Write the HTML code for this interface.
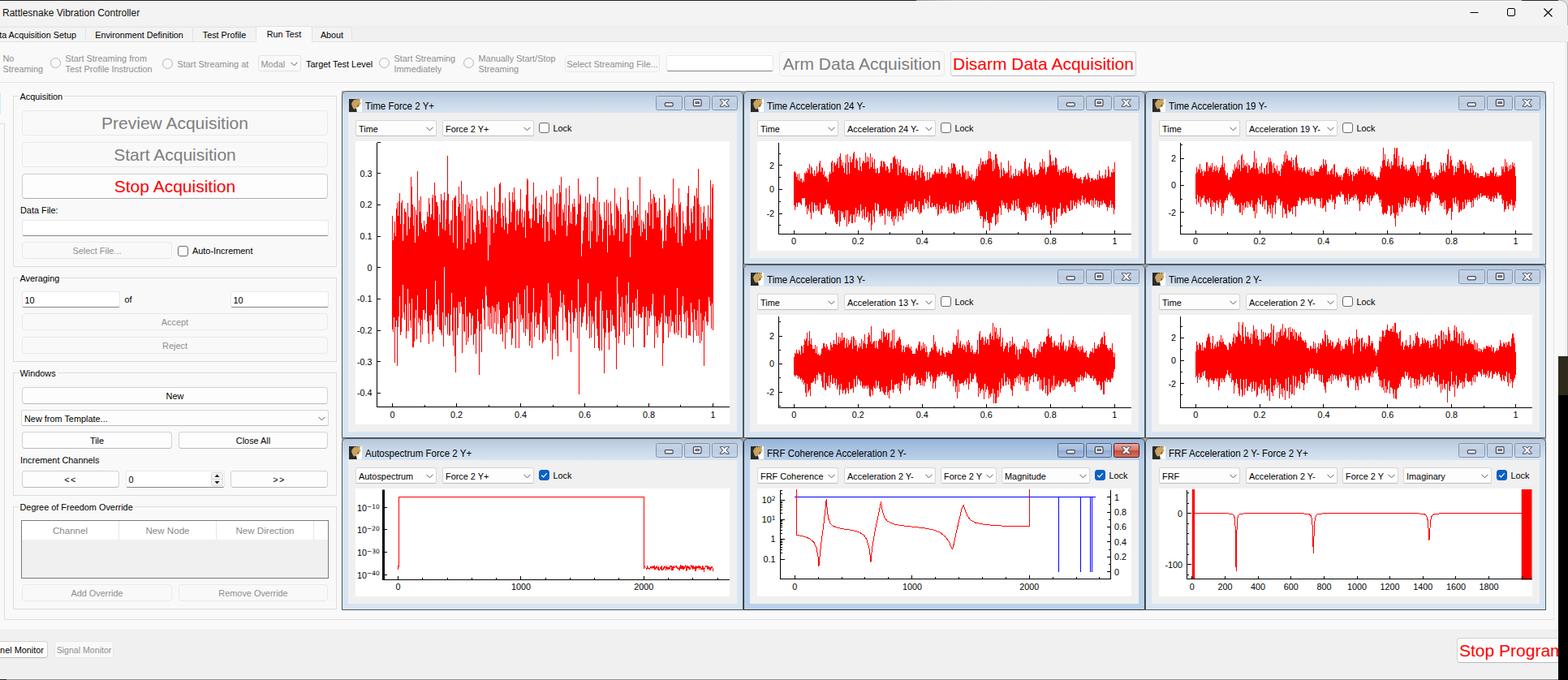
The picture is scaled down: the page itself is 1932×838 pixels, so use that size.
<!DOCTYPE html><html><head><meta charset="utf-8"><title>Rattlesnake Vibration Controller</title><style>

html,body{margin:0;padding:0}
body{width:1932px;height:838px;overflow:hidden;position:relative;background:#f9f9f9;font-family:"Liberation Sans",sans-serif;font-size:10.9px;color:#000}
div,span,svg{position:absolute;box-sizing:border-box;white-space:nowrap}
.titlebar{left:0;top:0;width:1932px;height:31px;background:#f3f3f3}
.tabbar{left:0;top:31px;width:1932px;height:21px;background:#f0f0f0;border-bottom:1px solid #e4e4e4}
.tab{top:33px;height:18px;border:1px solid #e4e4e4;border-bottom:none;background:#f3f3f3;text-align:center;line-height:18px;font-size:10.8px;border-radius:3px 3px 0 0}
.tab.sel{top:32px;height:20px;background:#f9f9f9;border-color:#e2e2e2;line-height:19px}
.gray{color:#8f8f8f}
.rad{width:13px;height:13px;border-radius:50%;border:1px solid #b5b5b5;background:#f9f9f9}
.btn{background:#fdfdfd;border:1px solid #d2d2d2;border-bottom-color:#b9b9b9;border-radius:4px;text-align:center;line-height:20px;height:21px}
.btn.dis{background:#f9f9f9;border-color:#e9e9e9;color:#8e8e8e}
.big{font-size:21px;height:31px;line-height:29px}
.big.dis{color:#7e7e7e}
.red{color:#f00}
.le{background:#fff;border:1px solid #e8e8e8;border-bottom:1px solid #868686;border-radius:3px;height:20px;line-height:20px;padding-left:3px}
.gb{border:1px solid #dcdcdc;border-radius:0}
.gl{background:#f9f9f9;padding:0 2px;line-height:12px;height:12px}
.lbl{line-height:13px;height:13px}
.cb{background:#fdfdfd;border:1px solid #d6d6d6;border-bottom-color:#bdbdbd;border-radius:2.5px;padding-left:3px;overflow:hidden}
.cb.dis{background:#f9f9f9;border-color:#e3e3e3;color:#8e8e8e}
.chev{right:3px;top:6.5px}
.ck{width:13px;height:13px;border:1px solid #6b6b6b;border-radius:3px;background:#fdfdfd}
.ck.on{background:#0a60c4;border-color:#0a60c4}
.ck.on svg{left:-1px;top:-1px}
.sw{border:1px solid #50555c;border-radius:6px 6px 0 0;background:#d7e4f2;overflow:hidden}
.sw.act{background:#b9d1ea;border-color:#2d3238}
.tb{left:0;top:0;right:0;height:26px;background:linear-gradient(#b4c6db 0,#c6d5e6 40%,#d7e4f2 100%)}
.sw.act .tb{background:linear-gradient(#94b2d6 0,#a9c3e2 45%,#b9d1ea 100%)}
.ico{left:8px;top:9px}
.tt{left:28px;top:11px;font-size:12.3px;line-height:14px;transform:scaleX(.94);transform-origin:0 50%}
.ct{left:7px;top:26px;right:7px;bottom:7px;background:#f0f0f0}
.wb{top:5px;width:32.5px;height:18px;border:1px solid #8594ab;border-radius:2.5px;background:linear-gradient(#c5d3e6 0,#c0cfe3 49%,#bccce1 50%,#c8d6e8 100%);right:0}
.wb svg{left:-1px;top:-1px}
.wb.act{border-color:#4f6489;background:linear-gradient(#b5c9e4 0,#a5bcdc 49%,#8eaacf 50%,#a9c1e0 100%)}
.wb.close{border-color:#5a1a14;background:linear-gradient(#e8a99e 0,#d7786b 49%,#c44a39 50%,#d8705c 100%)}
.plot{overflow:hidden}
.th{top:0;height:23px;background:#fff;border-right:1px solid #e6e6e6;text-align:center;line-height:23px;color:#8a8a8a;font-size:11.6px}

</style></head><body>
<div class="titlebar"></div>
<div style="left:0;top:0;width:1932px;height:2px;background:#fdfdfd"></div><div style="left:0;top:0;width:1129px;height:1px;background:#1f1f1f"></div>
<div style="left:1129px;top:0;width:803px;height:1px;background:linear-gradient(90deg,#8f8f8f,#b4b4b4 6%,#b9b9b9)"></div>
<div style="left:1875px;top:0;width:45px;height:1px;background:#1f2630"></div>
<div style="left:1931px;top:6px;width:1px;height:433px;background:#b9b9b9"></div><div style="left:1928px;top:52px;width:3px;height:387px;background:#f1f1f1"></div>
<svg style="left:1922px;top:0" width="10" height="10"><path d="M0 0H10V10A9 9 0 0 0 1 1H0Z" fill="#dcdcdc"/><path d="M0 .5H1A9 9 0 0 1 9.5 9.5" fill="none" stroke="#b4b4b4"/></svg>
<div style="left:3px;top:9px;font-size:12px;line-height:15px;color:#111">Rattlesnake Vibration Controller</div>
<svg style="left:1800px;top:0" width="132" height="31"><path d="M11.5 15.5h10" stroke="#000" stroke-width="1"/><rect x="57.5" y="10.5" width="9" height="9" rx="1.5" fill="none" stroke="#000"/><path d="M102.5 10.5l10 10m0-10l-10 10" stroke="#000" stroke-width="1.1"/></svg>
<div class="tabbar"></div>
<div class="tab" style="left:-30px;width:136px;text-align:right;padding-right:11px">Data Acquisition Setup</div>
<div class="tab" style="left:105px;width:133px">Environment Definition</div>
<div class="tab" style="left:237px;width:79px">Test Profile</div>
<div class="tab" style="left:384px;width:50px">About</div>
<div class="tab sel" style="left:315px;width:70px">Run Test</div>
<div style="left:0;top:101px;width:1915px;height:1px;background:#e3e3e3"></div>
<div class="lbl gray" style="left:3.5px;top:65.5px">No</div><div class="lbl gray" style="left:3.5px;top:78.5px">Streaming</div>
<div class="rad" style="left:62px;top:71px"></div>
<div class="lbl gray" style="left:80.5px;top:65.5px">Start Streaming from</div><div class="lbl gray" style="left:80.5px;top:78.5px">Test Profile Instruction</div>
<div class="rad" style="left:200px;top:72px"></div>
<div class="lbl gray" style="left:218.5px;top:72.5px">Start Streaming at</div>
<div class="cb dis" style="left:317.5px;top:68px;width:53px;height:20px;line-height:20px">Modal<svg class="chev" width="9" height="6" viewBox="0 0 9 6"><path d="M.5 .8L4.5 4.8L8.5 .8" fill="none" stroke="#555" stroke-width="1"/></svg></div>
<div class="lbl" style="left:377px;top:72.5px">Target Test Level</div>
<div class="rad" style="left:467px;top:71px"></div>
<div class="lbl gray" style="left:485.5px;top:65.5px">Start Streaming</div><div class="lbl gray" style="left:485.5px;top:78.5px">Immediately</div>
<div class="rad" style="left:571px;top:71px"></div>
<div class="lbl gray" style="left:589.5px;top:65.5px">Manually Start/Stop</div><div class="lbl gray" style="left:589.5px;top:78.5px">Streaming</div>
<div class="btn dis" style="left:696px;top:68px;width:117px;height:21px;line-height:20px">Select Streaming File...</div>
<div class="le" style="left:820.5px;top:68px;width:132px;height:20px"></div>
<div class="btn big dis" style="left:960px;top:63px;width:204px;height:31px">Arm Data Acquisition</div>
<div class="btn big red" style="left:1171px;top:63px;width:229px;height:31px">Disarm Data Acquisition</div>
<div style="left:5px;top:152px;width:1px;height:612px;background:#dedede"></div>
<div style="left:0;top:152px;width:6px;height:1px;background:#dedede"></div>
<div style="left:5px;top:763px;width:1910px;height:1px;background:#dedede"></div>
<div style="left:1914px;top:101px;width:1px;height:663px;background:#e6e6e6"></div>
<div style="left:0;top:115px;width:1px;height:25px;background:repeating-linear-gradient(#9fe3f3 0 1px,#f9f9f9 1px 2px)"></div>
<div class="gb" style="left:16px;top:118px;width:399px;height:211px"></div>
<div class="gl" style="left:22.5px;top:112.5px">Acquisition</div>
<div class="btn big dis" style="left:27px;top:136px;width:377px">Preview Acquisition</div>
<div class="btn big dis" style="left:27px;top:175px;width:377px">Start Acquisition</div>
<div class="btn big red" style="left:27px;top:214px;width:377px;border-color:#cfcfcf;border-bottom-color:#adadad">Stop Acquisition</div>
<div class="lbl" style="left:25px;top:252.5px">Data File:</div>
<div class="le" style="left:26.5px;top:271px;width:378px"></div>
<div class="btn dis" style="left:27px;top:298px;width:185px">Select File...</div>
<div class="ck" style="left:219px;top:302.5px"></div>
<div class="lbl" style="left:237px;top:302.5px">Auto-Increment</div>
<div class="gb" style="left:16px;top:342px;width:399px;height:104px"></div>
<div class="gl" style="left:22.5px;top:336.5px">Averaging</div>
<div class="le" style="left:26.5px;top:359px;width:121px">10</div>
<div class="lbl" style="left:153.5px;top:363px">of</div>
<div class="le" style="left:283.5px;top:359px;width:121px">10</div>
<div class="btn dis" style="left:27px;top:386px;width:377px">Accept</div>
<div class="btn dis" style="left:27px;top:415px;width:377px">Reject</div>
<div class="gb" style="left:16px;top:459px;width:399px;height:152px"></div>
<div class="gl" style="left:22.5px;top:453.5px">Windows</div>
<div class="btn" style="left:27px;top:477px;width:377px">New</div>
<div class="cb" style="left:26px;top:505px;width:379px;height:20px;line-height:20px">New from Template...<svg class="chev" width="9" height="6" viewBox="0 0 9 6"><path d="M.5 .8L4.5 4.8L8.5 .8" fill="none" stroke="#555" stroke-width="1"/></svg></div>
<div class="btn" style="left:27px;top:532px;width:185px">Tile</div>
<div class="btn" style="left:220px;top:532px;width:184px">Close All</div>
<div class="lbl" style="left:25px;top:560.5px">Increment Channels</div>
<div class="btn" style="left:27px;top:580px;width:120px;letter-spacing:1.5px">&lt;&lt;</div>
<div class="le" style="left:154.5px;top:580px;width:122px;height:21px;line-height:21px">0</div>
<svg style="left:260px;top:582px" width="15" height="17"><rect x=".5" y=".5" width="14" height="16" rx="1" fill="#f2f2f2" stroke="#d9d9d9"/><path d="M0 8.5h15" stroke="#d9d9d9"/><path d="M4.5 6L7.5 2.5L10.5 6ZM4.5 11L7.5 14.5L10.5 11Z" fill="#222"/></svg>
<div class="btn" style="left:284px;top:580px;width:120px;letter-spacing:1.5px">&gt;&gt;</div>
<div class="gb" style="left:16px;top:624px;width:399px;height:127px"></div>
<div class="gl" style="left:22.5px;top:618.5px">Degree of Freedom Override</div>
<div style="left:26px;top:641px;width:379px;height:72px;border:1px solid #7a7a7a;background:#f0f0f0"></div>
<div style="left:27px;top:642px;width:377px;height:23px;background:#fff"></div>
<div class="th" style="left:27px;top:642px;width:120px">Channel</div>
<div class="th" style="left:147px;top:642px;width:120px">New Node</div>
<div class="th" style="left:267px;top:642px;width:120px">New Direction</div>
<div class="btn dis" style="left:27px;top:720px;width:185px">Add Override</div>
<div class="btn dis" style="left:220px;top:720px;width:184px">Remove Override</div>
<div style="left:0;top:776px;width:1932px;height:62px;background:#f0f0f0"></div>
<div style="left:0;top:776px;width:1932px;height:1px;background:#e9e9e9"></div>
<div class="btn" style="left:-40px;top:790px;width:99px;text-align:right;padding-right:4px">Channel Monitor</div>
<div class="btn dis" style="left:67px;top:790px;width:73px;font-size:10.6px">Signal Monitor</div>
<div class="btn big red" style="left:1795px;top:785.5px;width:150px;text-align:left;padding-left:2px">Stop Program</div>
<div style="left:0;top:836px;width:1920px;height:1px;background:#f8f8f8"></div><div style="left:0;top:837px;width:1920px;height:1px;background:#8f8f8f"></div><div style="left:0;top:837px;width:8px;height:1px;background:#222"></div>
<div style="left:1920px;top:439px;width:12px;height:399px;background:#000"></div>
<div style="left:1920px;top:439px;width:12px;height:48px;background:#2e2a1c"></div>
<div style="left:421px;top:112px;width:1484px;height:640px;background:#a0a0a0"></div>
<div class="sw" style="left:421px;top:112px;width:495px;height:428px"><div class="tb"><svg class="ico" width="16" height="16" viewBox="0 0 16 16"><rect width="16" height="16" fill="#fff"/><path d="M0 0H9V12.5H9.4L9.8 16H0Z" fill="#2b2a27"/><path d="M6.6 1L7.6 .2L8.6 1.6L9.6 .5L11 .8L12 0H14V1.6L13.2 3L14.2 4.2L14.6 6L13.6 6.6L13 8L11.4 9.8L9.6 10.6L8.4 12L5.8 12.4L4.6 10.4L3.6 8L3 5.6L4 4L4.8 2.6Z" fill="#c9a35e"/><path d="M10.2 9.2L11.4 6.2L12 8.4L11 9.4Z" fill="#4a391c"/><path d="M8.8 .4L12 .2L11 1.2Z" fill="#2b2a27"/></svg><span class="tt">Time Force 2 Y+</span><div class="wb" style="right:74.2px"><svg width="33" height="18"><rect x="11.3" y="8.6" width="9.9" height="4.2" rx="1.4" fill="#f4f4f4" stroke="#43475a" stroke-width="1.2"/></svg></div><div class="wb" style="right:39.8px"><svg width="33" height="18"><rect x="11.4" y="4.7" width="9.6" height="8" rx="1.3" fill="#f6f6f6" stroke="#43475a" stroke-width="1.2"/><rect x="14.1" y="7.7" width="4.2" height="1.7" fill="#c9d5e6" stroke="#43475a" stroke-width="1.1"/></svg></div><div class="wb" style="right:5.8px"><svg width="33" height="18"><path d="M10.6 4.8h3.3l7 8h-3.3zM17.6 4.8h3.3l-7 8h-3.3z" fill="#43475a" stroke="#43475a" stroke-width="1.7" stroke-linejoin="round"/><path d="M10.6 4.8h3.3l7 8h-3.3zM17.6 4.8h3.3l-7 8h-3.3z" fill="#f6f6f6"/></svg></div></div><div class="ct"></div></div><div class="cb" style="left:438px;top:148px;width:100px;height:20px;line-height:20px">Time<svg class="chev" width="9" height="6" viewBox="0 0 9 6"><path d="M.5 .8L4.5 4.8L8.5 .8" fill="none" stroke="#555" stroke-width="1"/></svg></div><div class="cb" style="left:545px;top:148px;width:112.5px;height:20px;line-height:20px">Force 2 Y+<svg class="chev" width="9" height="6" viewBox="0 0 9 6"><path d="M.5 .8L4.5 4.8L8.5 .8" fill="none" stroke="#555" stroke-width="1"/></svg></div><div class="ck" style="left:664px;top:151px"></div><div class="lbl" style="left:681.5px;top:151.5px">Lock</div><svg class="plot" style="left:438px;top:174px" width="461" height="349" viewBox="438 174 461 349"><rect x="438" y="174" width="461" height="349" fill="#fff"/><path d="M483.5 266V406M484.5 296V409M485.5 287V391M486.5 273V447M487.5 291V403M488.5 257V395M489.5 250V451M490.5 266V403M491.5 248V390M492.5 238V365M493.5 276V413M494.5 250V409M495.5 247V392M496.5 297V351M497.5 276V385M498.5 257V394M499.5 261V375M500.5 262V417M501.5 290V408M502.5 250V356M503.5 267V408M504.5 282V374M505.5 268V395M506.5 218V404M507.5 230V368M508.5 252V428M509.5 278V428M510.5 255V421M511.5 299V392M512.5 259V382M513.5 265V418M514.5 211V364M515.5 291V398M516.5 247V392M517.5 261V401M518.5 242V422M519.5 275V394M520.5 281V412M521.5 283V382M522.5 272V382M523.5 278V394M524.5 286V386M525.5 276V356M526.5 261V396M527.5 267V411M528.5 244V424M529.5 251V389M530.5 268V395M531.5 264V388M532.5 244V412M533.5 240V421M534.5 271V408M535.5 225V382M536.5 241V346M537.5 249V375M538.5 249V388M539.5 254V403M540.5 291V369M541.5 264V406M542.5 274V407M543.5 239V410M544.5 246V413M545.5 282V385M546.5 247V427M547.5 237V329M548.5 284V401M549.5 270V390M550.5 247V391M551.5 192V412M552.5 239V386M553.5 276V414M554.5 290V413M555.5 272V388M556.5 271V361M557.5 247V408M558.5 299V426M559.5 244V379M560.5 243V439M561.5 241V459M562.5 266V379M563.5 306V413M564.5 255V404M565.5 230V372M566.5 251V386M567.5 261V372M568.5 223V378M569.5 272V435M570.5 239V387M571.5 308V408M572.5 266V409M573.5 252V366M574.5 299V425M575.5 240V390M576.5 294V421M577.5 249V416M578.5 257V385M579.5 251V386M580.5 301V413M581.5 247V392M582.5 254V389M583.5 283V425M584.5 286V412M585.5 299V411M586.5 277V436M587.5 245V405M588.5 260V381M589.5 271V396M590.5 276V462M591.5 288V408M592.5 242V399M593.5 259V434M594.5 253V369M595.5 274V380M596.5 257V394M597.5 260V406M598.5 258V353M599.5 280V364M600.5 236V378M601.5 321V402M602.5 266V379M603.5 302V406M604.5 270V386M605.5 253V405M606.5 258V377M607.5 268V411M608.5 287V379M609.5 231V398M610.5 259V384M611.5 276V412M612.5 262V375M613.5 260V399M614.5 249V372M615.5 227V382M616.5 225V412M617.5 269V405M618.5 280V411M619.5 250V421M620.5 266V392M621.5 283V398M622.5 244V430M623.5 268V389M624.5 275V410M625.5 288V387M626.5 276V373M627.5 237V379M628.5 247V406M629.5 274V398M630.5 261V425M631.5 237V417M632.5 249V371M633.5 231V396M634.5 246V397M635.5 284V429M636.5 260V366M637.5 258V393M638.5 277V361M639.5 260V429M640.5 257V375M641.5 233V397M642.5 274V388M643.5 258V394M644.5 280V392M645.5 268V410M646.5 260V357M647.5 293V414M648.5 240V405M649.5 220V352M650.5 222V406M651.5 260V386M652.5 269V426M653.5 270V420M654.5 281V397M655.5 269V429M656.5 252V385M657.5 225V355M658.5 272V415M659.5 244V390M660.5 242V385M661.5 257V404M662.5 275V400M663.5 275V400M664.5 250V419M665.5 265V386M666.5 252V378M667.5 240V370M668.5 281V423M669.5 264V421M670.5 258V397M671.5 298V419M672.5 267V402M673.5 235V406M674.5 273V411M675.5 274V349M676.5 297V391M677.5 261V361M678.5 242V420M679.5 243V367M680.5 282V443M681.5 233V411M682.5 284V406M683.5 252V406M684.5 289V418M685.5 250V389M686.5 238V423M687.5 267V439M688.5 251V384M689.5 228V378M690.5 237V358M691.5 218V379M692.5 278V373M693.5 258V407M694.5 262V363M695.5 252V376M696.5 272V392M697.5 232V397M698.5 291V419M699.5 278V420M700.5 253V382M701.5 229V385M702.5 275V399M703.5 261V434M704.5 276V370M705.5 251V385M706.5 255V410M707.5 245V396M708.5 255V392M709.5 278V380M710.5 276V385M711.5 264V417M712.5 220V344M713.5 251V486M714.5 239V384M715.5 241V379M716.5 316V403M717.5 300V398M718.5 284V390M719.5 267V385M720.5 261V378M721.5 242V374M722.5 268V407M723.5 250V399M724.5 250V349M725.5 297V390M726.5 239V417M727.5 306V383M728.5 272V416M729.5 285V390M730.5 251V399M731.5 243V396M732.5 244V429M733.5 259V371M734.5 247V366M735.5 298V405M736.5 218V414M737.5 290V429M738.5 249V432M739.5 264V370M740.5 267V359M741.5 271V432M742.5 298V383M743.5 282V405M744.5 249V460M745.5 272V416M746.5 272V410M747.5 246V382M748.5 311V392M749.5 250V410M750.5 277V431M751.5 290V409M752.5 248V382M753.5 263V408M754.5 278V388M755.5 284V401M756.5 290V402M757.5 232V406M758.5 282V416M759.5 251V455M760.5 254V341M761.5 257V362M762.5 260V423M763.5 297V414M764.5 243V378M765.5 264V391M766.5 274V366M767.5 298V409M768.5 270V385M769.5 281V425M770.5 264V398M771.5 288V364M772.5 287V414M773.5 231V374M774.5 246V348M775.5 261V412M776.5 317V391M777.5 290V404M778.5 266V405M779.5 281V373M780.5 248V428M781.5 272V383M782.5 259V383M783.5 259V368M784.5 268V389M785.5 253V357M786.5 264V404M787.5 278V387M788.5 218V387M789.5 291V391M790.5 271V392M791.5 286V385M792.5 273V378M793.5 276V428M794.5 282V428M795.5 259V391M796.5 296V378M797.5 262V413M798.5 263V383M799.5 249V402M800.5 278V392M801.5 234V384M802.5 251V389M803.5 245V375M804.5 282V362M805.5 239V389M806.5 243V429M807.5 250V390M808.5 249V411M809.5 268V402M810.5 260V416M811.5 268V395M812.5 244V400M813.5 259V397M814.5 284V391M815.5 281V386M816.5 306V451M817.5 297V423M818.5 240V364M819.5 245V398M820.5 297V389M821.5 277V391M822.5 266V399M823.5 262V416M824.5 258V390M825.5 260V409M826.5 281V382M827.5 256V402M828.5 251V396M829.5 220V397M830.5 279V410M831.5 253V412M832.5 287V388M833.5 262V410M834.5 267V355M835.5 299V413M836.5 232V407M837.5 252V388M838.5 249V396M839.5 299V416M840.5 303V377M841.5 260V365M842.5 275V387M843.5 288V397M844.5 279V385M845.5 283V417M846.5 254V383M847.5 238V392M848.5 229V413M849.5 278V413M850.5 287V414M851.5 257V373M852.5 261V385M853.5 275V397M854.5 254V422M855.5 241V381M856.5 242V407M857.5 297V394M858.5 232V414M859.5 244V383M860.5 208V414M861.5 252V369M862.5 295V423M863.5 255V386M864.5 275V420M865.5 283V409M866.5 262V395M867.5 254V451M868.5 273V390M869.5 269V384M870.5 295V396M871.5 279V401M872.5 253V397M873.5 284V366M874.5 268V371M875.5 222V377M876.5 270V405M877.5 231V374M878.5 227V407" stroke="#f00" stroke-width="1" fill="none" shape-rendering="crispEdges"/><path d="M464.5 175.5V501.5H899M464.5 175h4M464.5 213.7h4M464.5 252.4h4M464.5 291.1h4M464.5 329.8h4M464.5 368.5h4M464.5 407.2h4M464.5 445.9h4M464.5 484.6h4M483.6 501.5v-5M523.1 501.5v-2.5M562.6 501.5v-5M602 501.5v-2.5M641.5 501.5v-5M681 501.5v-2.5M720.5 501.5v-5M760 501.5v-2.5M799.4 501.5v-5M838.9 501.5v-2.5M878.4 501.5v-5" stroke="#000" stroke-width="1" fill="none" shape-rendering="crispEdges"/><g font-family='"Liberation Sans", sans-serif' fill="#000"><text x="458.5" y="178.8" text-anchor="end" font-size="10.8"></text><text x="458.5" y="217.5" text-anchor="end" font-size="10.8">0.3</text><text x="458.5" y="256.2" text-anchor="end" font-size="10.8">0.2</text><text x="458.5" y="294.9" text-anchor="end" font-size="10.8">0.1</text><text x="458.5" y="333.6" text-anchor="end" font-size="10.8">0</text><text x="458.5" y="372.3" text-anchor="end" font-size="10.8">-0.1</text><text x="458.5" y="411" text-anchor="end" font-size="10.8">-0.2</text><text x="458.5" y="449.7" text-anchor="end" font-size="10.8">-0.3</text><text x="458.5" y="488.4" text-anchor="end" font-size="10.8">-0.4</text><text x="483.6" y="514.8" text-anchor="middle" font-size="10.8">0</text><text x="562.6" y="514.8" text-anchor="middle" font-size="10.8">0.2</text><text x="641.5" y="514.8" text-anchor="middle" font-size="10.8">0.4</text><text x="720.5" y="514.8" text-anchor="middle" font-size="10.8">0.6</text><text x="799.4" y="514.8" text-anchor="middle" font-size="10.8">0.8</text><text x="878.4" y="514.8" text-anchor="middle" font-size="10.8">1</text></g></svg>
<div class="sw" style="left:916px;top:112px;width:495px;height:214px"><div class="tb"><svg class="ico" width="16" height="16" viewBox="0 0 16 16"><rect width="16" height="16" fill="#fff"/><path d="M0 0H9V12.5H9.4L9.8 16H0Z" fill="#2b2a27"/><path d="M6.6 1L7.6 .2L8.6 1.6L9.6 .5L11 .8L12 0H14V1.6L13.2 3L14.2 4.2L14.6 6L13.6 6.6L13 8L11.4 9.8L9.6 10.6L8.4 12L5.8 12.4L4.6 10.4L3.6 8L3 5.6L4 4L4.8 2.6Z" fill="#c9a35e"/><path d="M10.2 9.2L11.4 6.2L12 8.4L11 9.4Z" fill="#4a391c"/><path d="M8.8 .4L12 .2L11 1.2Z" fill="#2b2a27"/></svg><span class="tt">Time Acceleration 24 Y-</span><div class="wb" style="right:74.2px"><svg width="33" height="18"><rect x="11.3" y="8.6" width="9.9" height="4.2" rx="1.4" fill="#f4f4f4" stroke="#43475a" stroke-width="1.2"/></svg></div><div class="wb" style="right:39.8px"><svg width="33" height="18"><rect x="11.4" y="4.7" width="9.6" height="8" rx="1.3" fill="#f6f6f6" stroke="#43475a" stroke-width="1.2"/><rect x="14.1" y="7.7" width="4.2" height="1.7" fill="#c9d5e6" stroke="#43475a" stroke-width="1.1"/></svg></div><div class="wb" style="right:5.8px"><svg width="33" height="18"><path d="M10.6 4.8h3.3l7 8h-3.3zM17.6 4.8h3.3l-7 8h-3.3z" fill="#43475a" stroke="#43475a" stroke-width="1.7" stroke-linejoin="round"/><path d="M10.6 4.8h3.3l7 8h-3.3zM17.6 4.8h3.3l-7 8h-3.3z" fill="#f6f6f6"/></svg></div></div><div class="ct"></div></div><div class="cb" style="left:933px;top:148px;width:100px;height:20px;line-height:20px">Time<svg class="chev" width="9" height="6" viewBox="0 0 9 6"><path d="M.5 .8L4.5 4.8L8.5 .8" fill="none" stroke="#555" stroke-width="1"/></svg></div><div class="cb" style="left:1040px;top:148px;width:112.5px;height:20px;line-height:20px">Acceleration 24 Y-<svg class="chev" width="9" height="6" viewBox="0 0 9 6"><path d="M.5 .8L4.5 4.8L8.5 .8" fill="none" stroke="#555" stroke-width="1"/></svg></div><div class="ck" style="left:1159px;top:151px"></div><div class="lbl" style="left:1176.5px;top:151.5px">Lock</div><svg class="plot" style="left:933px;top:174px" width="461" height="135" viewBox="933 174 461 135"><rect x="933" y="174" width="461" height="135" fill="#fff"/><path d="M978.5 212V253M979.5 211V259M980.5 213V255M981.5 218V250M982.5 215V255M983.5 222V250M984.5 214V249M985.5 223V250M986.5 220V251M987.5 220V253M988.5 225V244M989.5 222V245M990.5 224V244M991.5 213V244M992.5 214V255M993.5 211V253M994.5 213V264M995.5 207V257M996.5 209V260M997.5 202V252M998.5 214V262M999.5 205V270M1000.5 207V249M1001.5 214V260M1002.5 217V262M1003.5 210V250M1004.5 217V253M1005.5 214V260M1006.5 205V253M1007.5 213V258M1008.5 211V260M1009.5 201V260M1010.5 198V250M1011.5 212V264M1012.5 206V265M1013.5 207V257M1014.5 215V257M1015.5 211V256M1016.5 218V252M1017.5 217V253M1018.5 219V246M1019.5 220V251M1020.5 224V251M1021.5 215V257M1022.5 212V253M1023.5 214V264M1024.5 200V259M1025.5 198V264M1026.5 212V263M1027.5 201V260M1028.5 200V267M1029.5 204V274M1030.5 202V276M1031.5 199V276M1032.5 195V273M1033.5 207V259M1034.5 193V279M1035.5 189V273M1036.5 197V260M1037.5 204V263M1038.5 200V261M1039.5 207V268M1040.5 213V271M1041.5 201V267M1042.5 191V259M1043.5 215V279M1044.5 190V259M1045.5 200V276M1046.5 214V273M1047.5 193V266M1048.5 200V264M1049.5 200V275M1050.5 196V275M1051.5 189V265M1052.5 187V264M1053.5 207V274M1054.5 197V256M1055.5 195V267M1056.5 198V263M1057.5 209V259M1058.5 210V267M1059.5 194V264M1060.5 205V252M1061.5 211V260M1062.5 201V269M1063.5 198V258M1064.5 199V267M1065.5 201V271M1066.5 188V255M1067.5 200V268M1068.5 193V267M1069.5 199V261M1070.5 194V274M1071.5 208V272M1072.5 189V263M1073.5 206V284M1074.5 194V277M1075.5 200V259M1076.5 208V267M1077.5 196V274M1078.5 208V250M1079.5 213V259M1080.5 208V260M1081.5 207V251M1082.5 214V252M1083.5 213V264M1084.5 205V267M1085.5 199V263M1086.5 198V266M1087.5 206V266M1088.5 199V259M1089.5 199V263M1090.5 202V277M1091.5 210V257M1092.5 205V257M1093.5 205V266M1094.5 208V260M1095.5 213V267M1096.5 212V262M1097.5 201V260M1098.5 201V270M1099.5 208V273M1100.5 194V267M1101.5 194V278M1102.5 192V266M1103.5 196V270M1104.5 202V267M1105.5 196V257M1106.5 216V273M1107.5 200V266M1108.5 204V261M1109.5 197V266M1110.5 213V267M1111.5 208V260M1112.5 206V271M1113.5 205V263M1114.5 212V256M1115.5 207V251M1116.5 216V263M1117.5 207V248M1118.5 209V255M1119.5 217V258M1120.5 213V251M1121.5 217V260M1122.5 214V252M1123.5 211V251M1124.5 207V261M1125.5 216V258M1126.5 212V246M1127.5 212V256M1128.5 222V255M1129.5 211V255M1130.5 211V258M1131.5 216V262M1132.5 207V248M1133.5 203V264M1134.5 219V262M1135.5 210V262M1136.5 204V253M1137.5 213V253M1138.5 212V258M1139.5 217V245M1140.5 223V250M1141.5 222V251M1142.5 212V247M1143.5 222V257M1144.5 221V249M1145.5 212V241M1146.5 219V255M1147.5 219V256M1148.5 216V250M1149.5 214V255M1150.5 215V255M1151.5 211V253M1152.5 208V255M1153.5 212V258M1154.5 214V251M1155.5 212V266M1156.5 214V264M1157.5 208V253M1158.5 214V258M1159.5 212V263M1160.5 204V257M1161.5 212V258M1162.5 214V254M1163.5 214V258M1164.5 212V256M1165.5 219V249M1166.5 215V255M1167.5 214V260M1168.5 206V259M1169.5 213V263M1170.5 208V252M1171.5 214V263M1172.5 201V262M1173.5 207V252M1174.5 201V260M1175.5 202V262M1176.5 202V264M1177.5 206V253M1178.5 215V263M1179.5 211V258M1180.5 215V262M1181.5 213V254M1182.5 209V247M1183.5 214V261M1184.5 218V257M1185.5 204V250M1186.5 204V260M1187.5 212V256M1188.5 213V248M1189.5 210V255M1190.5 221V253M1191.5 211V250M1192.5 220V258M1193.5 211V250M1194.5 217V258M1195.5 218V248M1196.5 219V250M1197.5 215V252M1198.5 222V247M1199.5 220V247M1200.5 223V249M1201.5 220V249M1202.5 217V247M1203.5 208V252M1204.5 217V259M1205.5 205V256M1206.5 202V259M1207.5 210V266M1208.5 195V270M1209.5 203V266M1210.5 199V267M1211.5 199V281M1212.5 202V273M1213.5 203V270M1214.5 198V273M1215.5 202V261M1216.5 197V271M1217.5 196V275M1218.5 186V275M1219.5 195V284M1220.5 187V274M1221.5 196V275M1222.5 199V268M1223.5 211V267M1224.5 197V263M1225.5 208V263M1226.5 190V278M1227.5 190V276M1228.5 195V265M1229.5 202V274M1230.5 205V263M1231.5 209V254M1232.5 219V256M1233.5 200V265M1234.5 209V247M1235.5 217V253M1236.5 207V250M1237.5 210V253M1238.5 214V257M1239.5 214V256M1240.5 212V250M1241.5 213V258M1242.5 198V262M1243.5 210V257M1244.5 219V258M1245.5 204V259M1246.5 216V251M1247.5 220V253M1248.5 214V247M1249.5 217V260M1250.5 217V259M1251.5 208V247M1252.5 216V254M1253.5 217V257M1254.5 214V245M1255.5 210V257M1256.5 217V256M1257.5 211V259M1258.5 208V265M1259.5 212V260M1260.5 214V262M1261.5 211V261M1262.5 199V264M1263.5 195V272M1264.5 208V272M1265.5 210V255M1266.5 217V263M1267.5 206V254M1268.5 201V255M1269.5 212V258M1270.5 207V255M1271.5 210V256M1272.5 215V250M1273.5 218V262M1274.5 209V253M1275.5 212V249M1276.5 216V256M1277.5 215V254M1278.5 215V251M1279.5 214V263M1280.5 209V252M1281.5 200V261M1282.5 205V258M1283.5 206V271M1284.5 196V265M1285.5 208V269M1286.5 199V263M1287.5 206V262M1288.5 215V253M1289.5 212V259M1290.5 206V266M1291.5 206V261M1292.5 204V266M1293.5 185V266M1294.5 191V277M1295.5 199V281M1296.5 204V261M1297.5 198V256M1298.5 203V272M1299.5 204V276M1300.5 194V256M1301.5 195V274M1302.5 203V267M1303.5 212V258M1304.5 209V257M1305.5 216V257M1306.5 210V250M1307.5 210V266M1308.5 208V264M1309.5 213V263M1310.5 207V257M1311.5 212V261M1312.5 207V262M1313.5 205V263M1314.5 211V253M1315.5 213V256M1316.5 205V257M1317.5 213V260M1318.5 211V260M1319.5 208V247M1320.5 210V259M1321.5 214V258M1322.5 220V247M1323.5 216V253M1324.5 214V254M1325.5 213V249M1326.5 219V257M1327.5 220V250M1328.5 220V246M1329.5 220V251M1330.5 220V248M1331.5 218V253M1332.5 221V246M1333.5 226V241M1334.5 222V250M1335.5 218V246M1336.5 218V252M1337.5 216V244M1338.5 221V251M1339.5 221V250M1340.5 213V249M1341.5 216V251M1342.5 219V252M1343.5 224V247M1344.5 220V246M1345.5 219V254M1346.5 220V247M1347.5 222V256M1348.5 222V244M1349.5 220V252M1350.5 221V247M1351.5 222V247M1352.5 215V255M1353.5 221V248M1354.5 210V256M1355.5 217V253M1356.5 219V248M1357.5 220V253M1358.5 216V251M1359.5 220V247M1360.5 220V250M1361.5 215V251M1362.5 209V252M1363.5 219V255M1364.5 217V260M1365.5 205V255M1366.5 209V256M1367.5 218V253M1368.5 218V247M1369.5 212V256M1370.5 213V252M1371.5 208V256M1372.5 212V264M1373.5 200V258" stroke="#f00" stroke-width="1" fill="none" shape-rendering="crispEdges"/><path d="M959.5 175.5V288.5H1394M959.5 203.8h4M959.5 233.4h4M959.5 263h4M959.5 189h2M959.5 218.6h2M959.5 248.2h2M959.5 277.8h2M978.1 288.5v-5M1017.6 288.5v-2.5M1057.2 288.5v-5M1096.7 288.5v-2.5M1136.2 288.5v-5M1175.8 288.5v-2.5M1215.3 288.5v-5M1254.8 288.5v-2.5M1294.3 288.5v-5M1333.9 288.5v-2.5M1373.4 288.5v-5" stroke="#000" stroke-width="1" fill="none" shape-rendering="crispEdges"/><g font-family='"Liberation Sans", sans-serif' fill="#000"><text x="954" y="207.6" text-anchor="end" font-size="10.8">2</text><text x="954" y="237.2" text-anchor="end" font-size="10.8">0</text><text x="954" y="266.8" text-anchor="end" font-size="10.8">-2</text><text x="978.1" y="301.3" text-anchor="middle" font-size="10.8">0</text><text x="1057.2" y="301.3" text-anchor="middle" font-size="10.8">0.2</text><text x="1136.2" y="301.3" text-anchor="middle" font-size="10.8">0.4</text><text x="1215.3" y="301.3" text-anchor="middle" font-size="10.8">0.6</text><text x="1294.3" y="301.3" text-anchor="middle" font-size="10.8">0.8</text><text x="1373.4" y="301.3" text-anchor="middle" font-size="10.8">1</text></g></svg>
<div class="sw" style="left:1411px;top:112px;width:494px;height:214px"><div class="tb"><svg class="ico" width="16" height="16" viewBox="0 0 16 16"><rect width="16" height="16" fill="#fff"/><path d="M0 0H9V12.5H9.4L9.8 16H0Z" fill="#2b2a27"/><path d="M6.6 1L7.6 .2L8.6 1.6L9.6 .5L11 .8L12 0H14V1.6L13.2 3L14.2 4.2L14.6 6L13.6 6.6L13 8L11.4 9.8L9.6 10.6L8.4 12L5.8 12.4L4.6 10.4L3.6 8L3 5.6L4 4L4.8 2.6Z" fill="#c9a35e"/><path d="M10.2 9.2L11.4 6.2L12 8.4L11 9.4Z" fill="#4a391c"/><path d="M8.8 .4L12 .2L11 1.2Z" fill="#2b2a27"/></svg><span class="tt">Time Acceleration 19 Y-</span><div class="wb" style="right:74.2px"><svg width="33" height="18"><rect x="11.3" y="8.6" width="9.9" height="4.2" rx="1.4" fill="#f4f4f4" stroke="#43475a" stroke-width="1.2"/></svg></div><div class="wb" style="right:39.8px"><svg width="33" height="18"><rect x="11.4" y="4.7" width="9.6" height="8" rx="1.3" fill="#f6f6f6" stroke="#43475a" stroke-width="1.2"/><rect x="14.1" y="7.7" width="4.2" height="1.7" fill="#c9d5e6" stroke="#43475a" stroke-width="1.1"/></svg></div><div class="wb" style="right:5.8px"><svg width="33" height="18"><path d="M10.6 4.8h3.3l7 8h-3.3zM17.6 4.8h3.3l-7 8h-3.3z" fill="#43475a" stroke="#43475a" stroke-width="1.7" stroke-linejoin="round"/><path d="M10.6 4.8h3.3l7 8h-3.3zM17.6 4.8h3.3l-7 8h-3.3z" fill="#f6f6f6"/></svg></div></div><div class="ct"></div></div><div class="cb" style="left:1428px;top:148px;width:100px;height:20px;line-height:20px">Time<svg class="chev" width="9" height="6" viewBox="0 0 9 6"><path d="M.5 .8L4.5 4.8L8.5 .8" fill="none" stroke="#555" stroke-width="1"/></svg></div><div class="cb" style="left:1535px;top:148px;width:112.5px;height:20px;line-height:20px">Acceleration 19 Y-<svg class="chev" width="9" height="6" viewBox="0 0 9 6"><path d="M.5 .8L4.5 4.8L8.5 .8" fill="none" stroke="#555" stroke-width="1"/></svg></div><div class="ck" style="left:1654px;top:151px"></div><div class="lbl" style="left:1671.5px;top:151.5px">Lock</div><svg class="plot" style="left:1428px;top:174px" width="460" height="135" viewBox="1428 174 460 135"><rect x="1428" y="174" width="460" height="135" fill="#fff"/><path d="M1473.5 214V245M1474.5 206V252M1475.5 212V240M1476.5 208V249M1477.5 209V251M1478.5 202V242M1479.5 213V255M1480.5 208V246M1481.5 211V244M1482.5 217V244M1483.5 210V241M1484.5 212V249M1485.5 211V250M1486.5 200V252M1487.5 200V246M1488.5 211V248M1489.5 205V250M1490.5 207V244M1491.5 204V255M1492.5 206V264M1493.5 201V247M1494.5 212V255M1495.5 209V249M1496.5 205V250M1497.5 211V260M1498.5 204V250M1499.5 210V247M1500.5 206V252M1501.5 213V256M1502.5 210V249M1503.5 207V246M1504.5 206V250M1505.5 203V266M1506.5 192V256M1507.5 206V263M1508.5 201V250M1509.5 210V247M1510.5 216V247M1511.5 216V244M1512.5 213V247M1513.5 221V240M1514.5 222V239M1515.5 218V237M1516.5 218V242M1517.5 219V240M1518.5 214V242M1519.5 209V246M1520.5 211V244M1521.5 202V252M1522.5 208V253M1523.5 206V251M1524.5 199V254M1525.5 208V253M1526.5 197V252M1527.5 203V262M1528.5 211V262M1529.5 192V250M1530.5 190V265M1531.5 207V253M1532.5 197V259M1533.5 204V250M1534.5 203V256M1535.5 205V255M1536.5 201V248M1537.5 213V256M1538.5 203V249M1539.5 204V252M1540.5 209V255M1541.5 207V251M1542.5 207V247M1543.5 206V256M1544.5 200V260M1545.5 186V260M1546.5 208V269M1547.5 195V252M1548.5 201V263M1549.5 207V249M1550.5 209V244M1551.5 214V246M1552.5 205V251M1553.5 213V252M1554.5 201V241M1555.5 212V255M1556.5 214V252M1557.5 207V248M1558.5 207V258M1559.5 215V247M1560.5 203V247M1561.5 200V264M1562.5 214V261M1563.5 194V253M1564.5 200V257M1565.5 195V263M1566.5 199V252M1567.5 203V269M1568.5 213V256M1569.5 201V253M1570.5 207V249M1571.5 208V264M1572.5 211V250M1573.5 204V241M1574.5 214V247M1575.5 210V245M1576.5 211V245M1577.5 217V253M1578.5 208V250M1579.5 202V248M1580.5 204V268M1581.5 199V256M1582.5 190V258M1583.5 200V264M1584.5 186V263M1585.5 196V269M1586.5 191V252M1587.5 198V259M1588.5 198V262M1589.5 197V261M1590.5 199V260M1591.5 194V256M1592.5 206V264M1593.5 197V255M1594.5 204V254M1595.5 210V255M1596.5 194V267M1597.5 191V254M1598.5 201V254M1599.5 206V247M1600.5 210V248M1601.5 207V243M1602.5 209V245M1603.5 207V253M1604.5 212V250M1605.5 210V247M1606.5 207V248M1607.5 206V248M1608.5 212V244M1609.5 214V247M1610.5 211V244M1611.5 209V248M1612.5 212V252M1613.5 209V243M1614.5 216V251M1615.5 206V243M1616.5 217V243M1617.5 211V246M1618.5 216V245M1619.5 208V251M1620.5 211V254M1621.5 210V245M1622.5 212V244M1623.5 211V245M1624.5 212V245M1625.5 208V245M1626.5 205V248M1627.5 205V256M1628.5 203V244M1629.5 207V257M1630.5 196V256M1631.5 202V254M1632.5 204V253M1633.5 197V261M1634.5 202V247M1635.5 215V249M1636.5 211V250M1637.5 214V245M1638.5 215V247M1639.5 210V246M1640.5 209V240M1641.5 207V249M1642.5 215V247M1643.5 203V246M1644.5 202V258M1645.5 218V251M1646.5 212V242M1647.5 213V243M1648.5 215V241M1649.5 218V240M1650.5 216V242M1651.5 218V243M1652.5 216V236M1653.5 222V240M1654.5 218V239M1655.5 214V240M1656.5 213V248M1657.5 208V252M1658.5 208V244M1659.5 206V247M1660.5 214V252M1661.5 208V239M1662.5 217V248M1663.5 210V245M1664.5 212V245M1665.5 215V243M1666.5 223V243M1667.5 212V247M1668.5 217V241M1669.5 214V244M1670.5 214V239M1671.5 213V241M1672.5 215V247M1673.5 208V245M1674.5 211V251M1675.5 210V260M1676.5 205V249M1677.5 208V248M1678.5 211V250M1679.5 208V252M1680.5 205V249M1681.5 215V249M1682.5 208V245M1683.5 209V240M1684.5 213V249M1685.5 206V251M1686.5 212V244M1687.5 211V253M1688.5 215V241M1689.5 213V248M1690.5 217V246M1691.5 212V244M1692.5 215V241M1693.5 218V241M1694.5 217V237M1695.5 219V240M1696.5 222V239M1697.5 219V239M1698.5 218V242M1699.5 219V246M1700.5 212V250M1701.5 205V246M1702.5 207V255M1703.5 198V263M1704.5 182V265M1705.5 197V263M1706.5 190V262M1707.5 204V263M1708.5 205V264M1709.5 199V260M1710.5 196V253M1711.5 205V254M1712.5 201V254M1713.5 208V266M1714.5 199V264M1715.5 204V253M1716.5 203V262M1717.5 190V263M1718.5 182V269M1719.5 195V279M1720.5 183V265M1721.5 182V262M1722.5 205V266M1723.5 192V250M1724.5 204V256M1725.5 208V252M1726.5 203V255M1727.5 199V261M1728.5 194V257M1729.5 205V252M1730.5 205V243M1731.5 209V252M1732.5 203V254M1733.5 208V244M1734.5 211V250M1735.5 209V247M1736.5 210V244M1737.5 207V254M1738.5 203V256M1739.5 205V250M1740.5 203V255M1741.5 199V249M1742.5 204V255M1743.5 207V255M1744.5 209V250M1745.5 213V247M1746.5 205V241M1747.5 217V248M1748.5 205V243M1749.5 213V251M1750.5 204V253M1751.5 197V260M1752.5 204V262M1753.5 203V256M1754.5 199V253M1755.5 195V261M1756.5 190V265M1757.5 209V256M1758.5 200V248M1759.5 199V255M1760.5 200V260M1761.5 208V250M1762.5 213V248M1763.5 213V239M1764.5 219V241M1765.5 217V237M1766.5 221V237M1767.5 212V238M1768.5 218V244M1769.5 213V239M1770.5 215V244M1771.5 216V244M1772.5 216V241M1773.5 209V246M1774.5 213V253M1775.5 200V250M1776.5 204V254M1777.5 211V250M1778.5 201V249M1779.5 210V258M1780.5 212V247M1781.5 201V258M1782.5 204V265M1783.5 190V263M1784.5 184V260M1785.5 208V257M1786.5 199V257M1787.5 192V256M1788.5 197V271M1789.5 204V261M1790.5 205V244M1791.5 216V249M1792.5 212V251M1793.5 205V243M1794.5 212V251M1795.5 207V254M1796.5 200V247M1797.5 207V262M1798.5 197V261M1799.5 198V258M1800.5 199V260M1801.5 197V258M1802.5 202V249M1803.5 203V258M1804.5 214V257M1805.5 199V246M1806.5 203V253M1807.5 208V250M1808.5 209V246M1809.5 210V249M1810.5 213V246M1811.5 207V249M1812.5 201V249M1813.5 213V256M1814.5 204V247M1815.5 210V255M1816.5 216V244M1817.5 214V246M1818.5 212V244M1819.5 219V243M1820.5 213V247M1821.5 214V240M1822.5 219V245M1823.5 217V242M1824.5 217V238M1825.5 217V243M1826.5 217V242M1827.5 218V241M1828.5 219V241M1829.5 218V241M1830.5 212V241M1831.5 214V244M1832.5 217V244M1833.5 214V241M1834.5 217V246M1835.5 214V245M1836.5 210V248M1837.5 211V248M1838.5 213V245M1839.5 207V242M1840.5 206V249M1841.5 217V244M1842.5 214V241M1843.5 212V244M1844.5 218V245M1845.5 216V237M1846.5 218V238M1847.5 216V241M1848.5 217V240M1849.5 216V240M1850.5 205V245M1851.5 208V251M1852.5 205V247M1853.5 212V261M1854.5 196V258M1855.5 205V258M1856.5 200V248M1857.5 206V254M1858.5 211V258M1859.5 204V252M1860.5 209V251M1861.5 203V253M1862.5 208V246M1863.5 200V253M1864.5 204V260M1865.5 201V253M1866.5 206V256M1867.5 217V248" stroke="#f00" stroke-width="1" fill="none" shape-rendering="crispEdges"/><path d="M1454.5 175.5V288.5H1888M1454.5 195h4M1454.5 228.4h4M1454.5 261.8h4M1454.5 178.3h2M1454.5 211.7h2M1454.5 245.1h2M1454.5 278.5h2M1473.1 288.5v-5M1512.5 288.5v-2.5M1552 288.5v-5M1591.4 288.5v-2.5M1630.8 288.5v-5M1670.2 288.5v-2.5M1709.7 288.5v-5M1749.1 288.5v-2.5M1788.5 288.5v-5M1828 288.5v-2.5M1867.4 288.5v-5" stroke="#000" stroke-width="1" fill="none" shape-rendering="crispEdges"/><g font-family='"Liberation Sans", sans-serif' fill="#000"><text x="1449" y="198.8" text-anchor="end" font-size="10.8">2</text><text x="1449" y="232.2" text-anchor="end" font-size="10.8">0</text><text x="1449" y="265.6" text-anchor="end" font-size="10.8">-2</text><text x="1473.1" y="301.3" text-anchor="middle" font-size="10.8">0</text><text x="1552" y="301.3" text-anchor="middle" font-size="10.8">0.2</text><text x="1630.8" y="301.3" text-anchor="middle" font-size="10.8">0.4</text><text x="1709.7" y="301.3" text-anchor="middle" font-size="10.8">0.6</text><text x="1788.5" y="301.3" text-anchor="middle" font-size="10.8">0.8</text><text x="1867.4" y="301.3" text-anchor="middle" font-size="10.8">1</text></g></svg>
<div class="sw" style="left:916px;top:326px;width:495px;height:214px"><div class="tb"><svg class="ico" width="16" height="16" viewBox="0 0 16 16"><rect width="16" height="16" fill="#fff"/><path d="M0 0H9V12.5H9.4L9.8 16H0Z" fill="#2b2a27"/><path d="M6.6 1L7.6 .2L8.6 1.6L9.6 .5L11 .8L12 0H14V1.6L13.2 3L14.2 4.2L14.6 6L13.6 6.6L13 8L11.4 9.8L9.6 10.6L8.4 12L5.8 12.4L4.6 10.4L3.6 8L3 5.6L4 4L4.8 2.6Z" fill="#c9a35e"/><path d="M10.2 9.2L11.4 6.2L12 8.4L11 9.4Z" fill="#4a391c"/><path d="M8.8 .4L12 .2L11 1.2Z" fill="#2b2a27"/></svg><span class="tt">Time Acceleration 13 Y-</span><div class="wb" style="right:74.2px"><svg width="33" height="18"><rect x="11.3" y="8.6" width="9.9" height="4.2" rx="1.4" fill="#f4f4f4" stroke="#43475a" stroke-width="1.2"/></svg></div><div class="wb" style="right:39.8px"><svg width="33" height="18"><rect x="11.4" y="4.7" width="9.6" height="8" rx="1.3" fill="#f6f6f6" stroke="#43475a" stroke-width="1.2"/><rect x="14.1" y="7.7" width="4.2" height="1.7" fill="#c9d5e6" stroke="#43475a" stroke-width="1.1"/></svg></div><div class="wb" style="right:5.8px"><svg width="33" height="18"><path d="M10.6 4.8h3.3l7 8h-3.3zM17.6 4.8h3.3l-7 8h-3.3z" fill="#43475a" stroke="#43475a" stroke-width="1.7" stroke-linejoin="round"/><path d="M10.6 4.8h3.3l7 8h-3.3zM17.6 4.8h3.3l-7 8h-3.3z" fill="#f6f6f6"/></svg></div></div><div class="ct"></div></div><div class="cb" style="left:933px;top:362px;width:100px;height:20px;line-height:20px">Time<svg class="chev" width="9" height="6" viewBox="0 0 9 6"><path d="M.5 .8L4.5 4.8L8.5 .8" fill="none" stroke="#555" stroke-width="1"/></svg></div><div class="cb" style="left:1040px;top:362px;width:112.5px;height:20px;line-height:20px">Acceleration 13 Y-<svg class="chev" width="9" height="6" viewBox="0 0 9 6"><path d="M.5 .8L4.5 4.8L8.5 .8" fill="none" stroke="#555" stroke-width="1"/></svg></div><div class="ck" style="left:1159px;top:365px"></div><div class="lbl" style="left:1176.5px;top:365.5px">Lock</div><svg class="plot" style="left:933px;top:388px" width="461" height="135" viewBox="933 388 461 135"><rect x="933" y="388" width="461" height="135" fill="#fff"/><path d="M978.5 440V462M979.5 435V464M980.5 436V463M981.5 431V462M982.5 435V463M983.5 436V467M984.5 431V464M985.5 433V466M986.5 437V468M987.5 426V466M988.5 427V471M989.5 435V468M990.5 425V474M991.5 418V472M992.5 420V484M993.5 417V489M994.5 410V473M995.5 426V484M996.5 420V482M997.5 408V480M998.5 424V488M999.5 417V472M1000.5 425V472M1001.5 430V471M1002.5 430V470M1003.5 430V466M1004.5 425V473M1005.5 435V469M1006.5 427V462M1007.5 437V468M1008.5 436V459M1009.5 438V461M1010.5 438V461M1011.5 436V463M1012.5 430V470M1013.5 429V477M1014.5 423V478M1015.5 423V459M1016.5 427V480M1017.5 429V481M1018.5 424V472M1019.5 427V476M1020.5 431V476M1021.5 430V463M1022.5 432V478M1023.5 422V471M1024.5 425V462M1025.5 428V473M1026.5 424V473M1027.5 419V466M1028.5 424V472M1029.5 424V475M1030.5 410V467M1031.5 425V480M1032.5 422V477M1033.5 415V474M1034.5 423V487M1035.5 416V480M1036.5 420V473M1037.5 410V481M1038.5 419V485M1039.5 416V481M1040.5 416V480M1041.5 429V486M1042.5 423V484M1043.5 417V478M1044.5 428V481M1045.5 419V485M1046.5 425V471M1047.5 423V480M1048.5 419V479M1049.5 415V479M1050.5 430V478M1051.5 414V484M1052.5 416V467M1053.5 426V476M1054.5 419V477M1055.5 425V463M1056.5 433V474M1057.5 427V467M1058.5 429V468M1059.5 423V470M1060.5 427V475M1061.5 418V470M1062.5 430V477M1063.5 420V479M1064.5 423V475M1065.5 412V479M1066.5 424V476M1067.5 429V475M1068.5 424V479M1069.5 415V475M1070.5 410V478M1071.5 413V488M1072.5 421V489M1073.5 402V480M1074.5 424V482M1075.5 422V487M1076.5 421V476M1077.5 420V478M1078.5 429V479M1079.5 420V469M1080.5 428V478M1081.5 430V475M1082.5 420V470M1083.5 418V479M1084.5 417V483M1085.5 419V482M1086.5 408V477M1087.5 422V482M1088.5 405V484M1089.5 409V486M1090.5 415V487M1091.5 413V483M1092.5 410V476M1093.5 419V487M1094.5 411V483M1095.5 410V491M1096.5 428V481M1097.5 421V481M1098.5 420V468M1099.5 407V480M1100.5 430V484M1101.5 406V480M1102.5 426V474M1103.5 429V474M1104.5 422V473M1105.5 420V473M1106.5 420V479M1107.5 417V472M1108.5 415V482M1109.5 418V485M1110.5 425V475M1111.5 434V469M1112.5 431V470M1113.5 426V460M1114.5 434V473M1115.5 428V470M1116.5 428V463M1117.5 425V473M1118.5 428V468M1119.5 424V466M1120.5 428V481M1121.5 430V475M1122.5 427V466M1123.5 432V463M1124.5 436V464M1125.5 436V462M1126.5 436V460M1127.5 436V465M1128.5 430V464M1129.5 429V474M1130.5 432V473M1131.5 425V468M1132.5 421V472M1133.5 421V472M1134.5 432V475M1135.5 426V466M1136.5 430V475M1137.5 422V469M1138.5 429V476M1139.5 424V470M1140.5 434V471M1141.5 427V458M1142.5 434V467M1143.5 440V460M1144.5 437V458M1145.5 434V464M1146.5 433V470M1147.5 429V462M1148.5 428V464M1149.5 431V479M1150.5 413V472M1151.5 424V470M1152.5 421V479M1153.5 427V469M1154.5 433V465M1155.5 435V461M1156.5 433V464M1157.5 430V464M1158.5 438V462M1159.5 438V458M1160.5 432V463M1161.5 428V461M1162.5 435V459M1163.5 436V461M1164.5 440V462M1165.5 434V458M1166.5 434V462M1167.5 435V466M1168.5 432V463M1169.5 435V464M1170.5 433V470M1171.5 436V467M1172.5 436V462M1173.5 431V461M1174.5 422V476M1175.5 424V469M1176.5 425V472M1177.5 425V483M1178.5 414V476M1179.5 422V491M1180.5 406V468M1181.5 429V483M1182.5 423V473M1183.5 420V473M1184.5 429V472M1185.5 426V472M1186.5 424V472M1187.5 431V475M1188.5 425V470M1189.5 427V468M1190.5 434V474M1191.5 421V471M1192.5 425V466M1193.5 419V480M1194.5 422V473M1195.5 429V460M1196.5 434V470M1197.5 426V471M1198.5 431V467M1199.5 436V467M1200.5 434V462M1201.5 436V460M1202.5 434V464M1203.5 431V471M1204.5 419V472M1205.5 436V489M1206.5 411V478M1207.5 408V485M1208.5 419V482M1209.5 416V480M1210.5 415V479M1211.5 417V481M1212.5 425V492M1213.5 420V473M1214.5 415V483M1215.5 423V480M1216.5 418V476M1217.5 418V481M1218.5 425V491M1219.5 412V486M1220.5 410V489M1221.5 418V485M1222.5 414V485M1223.5 398V479M1224.5 419V497M1225.5 403V485M1226.5 409V497M1227.5 404V497M1228.5 417V490M1229.5 412V481M1230.5 418V489M1231.5 415V471M1232.5 404V484M1233.5 427V479M1234.5 422V466M1235.5 416V475M1236.5 433V476M1237.5 430V460M1238.5 427V471M1239.5 426V475M1240.5 422V470M1241.5 423V465M1242.5 434V474M1243.5 428V467M1244.5 420V470M1245.5 427V479M1246.5 425V481M1247.5 415V488M1248.5 425V475M1249.5 423V476M1250.5 424V466M1251.5 437V471M1252.5 427V465M1253.5 431V467M1254.5 443V463M1255.5 431V472M1256.5 430V461M1257.5 436V474M1258.5 430V464M1259.5 430V465M1260.5 426V469M1261.5 428V465M1262.5 421V475M1263.5 429V471M1264.5 428V482M1265.5 418V471M1266.5 430V482M1267.5 422V464M1268.5 432V473M1269.5 434V468M1270.5 434V464M1271.5 436V463M1272.5 440V462M1273.5 430V471M1274.5 429V460M1275.5 441V464M1276.5 437V464M1277.5 434V461M1278.5 430V470M1279.5 432V469M1280.5 424V465M1281.5 434V480M1282.5 421V468M1283.5 427V479M1284.5 427V482M1285.5 422V480M1286.5 421V465M1287.5 421V475M1288.5 424V485M1289.5 415V475M1290.5 414V488M1291.5 405V486M1292.5 412V467M1293.5 416V483M1294.5 416V484M1295.5 414V478M1296.5 422V475M1297.5 428V481M1298.5 423V463M1299.5 420V480M1300.5 426V476M1301.5 426V476M1302.5 425V473M1303.5 427V475M1304.5 422V469M1305.5 431V477M1306.5 422V476M1307.5 412V474M1308.5 426V470M1309.5 423V471M1310.5 421V472M1311.5 432V467M1312.5 430V476M1313.5 426V467M1314.5 433V472M1315.5 431V471M1316.5 427V470M1317.5 419V470M1318.5 428V473M1319.5 423V474M1320.5 425V477M1321.5 419V477M1322.5 414V476M1323.5 429V476M1324.5 421V483M1325.5 426V469M1326.5 424V471M1327.5 428V470M1328.5 431V465M1329.5 427V471M1330.5 433V465M1331.5 427V462M1332.5 431V469M1333.5 426V464M1334.5 429V469M1335.5 434V466M1336.5 435V465M1337.5 434V458M1338.5 432V466M1339.5 440V460M1340.5 440V461M1341.5 441V462M1342.5 436V463M1343.5 433V466M1344.5 433V466M1345.5 434V466M1346.5 429V463M1347.5 435V469M1348.5 422V467M1349.5 430V466M1350.5 429V469M1351.5 430V474M1352.5 426V475M1353.5 424V474M1354.5 428V470M1355.5 424V475M1356.5 418V481M1357.5 416V480M1358.5 415V471M1359.5 424V486M1360.5 409V486M1361.5 414V469M1362.5 425V471M1363.5 425V466M1364.5 429V471M1365.5 430V468M1366.5 432V468M1367.5 429V471M1368.5 429V471M1369.5 431V466M1370.5 423V467M1371.5 434V465M1372.5 440V458M1373.5 435V455" stroke="#f00" stroke-width="1" fill="none" shape-rendering="crispEdges"/><path d="M959.5 389.5V502.5H1394M959.5 414h4M959.5 448.5h4M959.5 483h4M959.5 396.8h2M959.5 431.2h2M959.5 465.8h2M959.5 500.2h2M978.2 502.5v-5M1017.7 502.5v-2.5M1057.2 502.5v-5M1096.7 502.5v-2.5M1136.2 502.5v-5M1175.8 502.5v-2.5M1215.3 502.5v-5M1254.8 502.5v-2.5M1294.3 502.5v-5M1333.8 502.5v-2.5M1373.3 502.5v-5" stroke="#000" stroke-width="1" fill="none" shape-rendering="crispEdges"/><g font-family='"Liberation Sans", sans-serif' fill="#000"><text x="954" y="417.8" text-anchor="end" font-size="10.8">2</text><text x="954" y="452.3" text-anchor="end" font-size="10.8">0</text><text x="954" y="486.8" text-anchor="end" font-size="10.8">-2</text><text x="978.2" y="515.3" text-anchor="middle" font-size="10.8">0</text><text x="1057.2" y="515.3" text-anchor="middle" font-size="10.8">0.2</text><text x="1136.2" y="515.3" text-anchor="middle" font-size="10.8">0.4</text><text x="1215.3" y="515.3" text-anchor="middle" font-size="10.8">0.6</text><text x="1294.3" y="515.3" text-anchor="middle" font-size="10.8">0.8</text><text x="1373.3" y="515.3" text-anchor="middle" font-size="10.8">1</text></g></svg>
<div class="sw" style="left:1411px;top:326px;width:494px;height:214px"><div class="tb"><svg class="ico" width="16" height="16" viewBox="0 0 16 16"><rect width="16" height="16" fill="#fff"/><path d="M0 0H9V12.5H9.4L9.8 16H0Z" fill="#2b2a27"/><path d="M6.6 1L7.6 .2L8.6 1.6L9.6 .5L11 .8L12 0H14V1.6L13.2 3L14.2 4.2L14.6 6L13.6 6.6L13 8L11.4 9.8L9.6 10.6L8.4 12L5.8 12.4L4.6 10.4L3.6 8L3 5.6L4 4L4.8 2.6Z" fill="#c9a35e"/><path d="M10.2 9.2L11.4 6.2L12 8.4L11 9.4Z" fill="#4a391c"/><path d="M8.8 .4L12 .2L11 1.2Z" fill="#2b2a27"/></svg><span class="tt">Time Acceleration 2 Y-</span><div class="wb" style="right:74.2px"><svg width="33" height="18"><rect x="11.3" y="8.6" width="9.9" height="4.2" rx="1.4" fill="#f4f4f4" stroke="#43475a" stroke-width="1.2"/></svg></div><div class="wb" style="right:39.8px"><svg width="33" height="18"><rect x="11.4" y="4.7" width="9.6" height="8" rx="1.3" fill="#f6f6f6" stroke="#43475a" stroke-width="1.2"/><rect x="14.1" y="7.7" width="4.2" height="1.7" fill="#c9d5e6" stroke="#43475a" stroke-width="1.1"/></svg></div><div class="wb" style="right:5.8px"><svg width="33" height="18"><path d="M10.6 4.8h3.3l7 8h-3.3zM17.6 4.8h3.3l-7 8h-3.3z" fill="#43475a" stroke="#43475a" stroke-width="1.7" stroke-linejoin="round"/><path d="M10.6 4.8h3.3l7 8h-3.3zM17.6 4.8h3.3l-7 8h-3.3z" fill="#f6f6f6"/></svg></div></div><div class="ct"></div></div><div class="cb" style="left:1428px;top:362px;width:100px;height:20px;line-height:20px">Time<svg class="chev" width="9" height="6" viewBox="0 0 9 6"><path d="M.5 .8L4.5 4.8L8.5 .8" fill="none" stroke="#555" stroke-width="1"/></svg></div><div class="cb" style="left:1535px;top:362px;width:112.5px;height:20px;line-height:20px">Acceleration 2 Y-<svg class="chev" width="9" height="6" viewBox="0 0 9 6"><path d="M.5 .8L4.5 4.8L8.5 .8" fill="none" stroke="#555" stroke-width="1"/></svg></div><div class="ck" style="left:1654px;top:365px"></div><div class="lbl" style="left:1671.5px;top:365.5px">Lock</div><svg class="plot" style="left:1428px;top:388px" width="460" height="135" viewBox="1428 388 460 135"><rect x="1428" y="388" width="460" height="135" fill="#fff"/><path d="M1473.5 433V465M1474.5 421V463M1475.5 425V472M1476.5 431V465M1477.5 423V460M1478.5 423V468M1479.5 425V465M1480.5 432V465M1481.5 422V459M1482.5 432V463M1483.5 428V458M1484.5 428V457M1485.5 429V466M1486.5 420V469M1487.5 416V467M1488.5 413V470M1489.5 411V477M1490.5 415V468M1491.5 422V466M1492.5 430V469M1493.5 423V468M1494.5 414V470M1495.5 430V473M1496.5 426V469M1497.5 424V466M1498.5 428V467M1499.5 421V470M1500.5 421V466M1501.5 427V481M1502.5 419V476M1503.5 421V468M1504.5 413V466M1505.5 422V471M1506.5 417V466M1507.5 421V468M1508.5 424V471M1509.5 425V466M1510.5 425V463M1511.5 427V461M1512.5 431V456M1513.5 431V462M1514.5 422V463M1515.5 423V466M1516.5 424V460M1517.5 427V471M1518.5 421V468M1519.5 416V469M1520.5 411V485M1521.5 423V475M1522.5 413V472M1523.5 415V467M1524.5 415V473M1525.5 408V478M1526.5 397V485M1527.5 411V488M1528.5 413V467M1529.5 420V480M1530.5 400V489M1531.5 397V487M1532.5 415V468M1533.5 424V487M1534.5 403V478M1535.5 414V467M1536.5 415V481M1537.5 409V482M1538.5 415V476M1539.5 418V477M1540.5 416V473M1541.5 411V471M1542.5 424V483M1543.5 412V479M1544.5 401V470M1545.5 408V482M1546.5 406V480M1547.5 417V471M1548.5 406V489M1549.5 414V487M1550.5 419V477M1551.5 418V479M1552.5 426V476M1553.5 418V473M1554.5 406V485M1555.5 419V480M1556.5 409V468M1557.5 418V484M1558.5 415V474M1559.5 410V475M1560.5 415V481M1561.5 414V488M1562.5 411V482M1563.5 411V479M1564.5 416V494M1565.5 410V466M1566.5 399V483M1567.5 424V484M1568.5 406V488M1569.5 401V475M1570.5 426V481M1571.5 419V474M1572.5 410V467M1573.5 421V478M1574.5 409V471M1575.5 416V475M1576.5 409V491M1577.5 407V473M1578.5 405V486M1579.5 414V479M1580.5 399V489M1581.5 413V478M1582.5 409V481M1583.5 404V493M1584.5 406V467M1585.5 417V482M1586.5 415V482M1587.5 404V465M1588.5 419V491M1589.5 403V483M1590.5 409V474M1591.5 409V486M1592.5 405V485M1593.5 414V463M1594.5 406V487M1595.5 418V476M1596.5 409V464M1597.5 410V478M1598.5 420V476M1599.5 414V472M1600.5 412V469M1601.5 415V479M1602.5 409V462M1603.5 416V471M1604.5 419V472M1605.5 420V472M1606.5 420V481M1607.5 422V474M1608.5 419V459M1609.5 422V463M1610.5 429V472M1611.5 429V466M1612.5 429V458M1613.5 432V464M1614.5 426V454M1615.5 427V461M1616.5 430V460M1617.5 429V454M1618.5 421V461M1619.5 430V467M1620.5 423V460M1621.5 429V462M1622.5 435V461M1623.5 428V456M1624.5 423V461M1625.5 430V469M1626.5 423V462M1627.5 423V470M1628.5 425V471M1629.5 417V462M1630.5 419V472M1631.5 421V476M1632.5 407V480M1633.5 412V484M1634.5 427V471M1635.5 413V471M1636.5 418V470M1637.5 423V466M1638.5 422V470M1639.5 419V463M1640.5 426V473M1641.5 421V461M1642.5 422V469M1643.5 430V463M1644.5 428V462M1645.5 427V467M1646.5 425V463M1647.5 422V466M1648.5 422V469M1649.5 417V468M1650.5 424V462M1651.5 420V465M1652.5 432V470M1653.5 426V460M1654.5 430V465M1655.5 430V461M1656.5 430V462M1657.5 424V464M1658.5 419V462M1659.5 424V469M1660.5 426V476M1661.5 418V478M1662.5 415V462M1663.5 420V467M1664.5 423V469M1665.5 426V465M1666.5 417V466M1667.5 436V468M1668.5 425V467M1669.5 417V464M1670.5 422V481M1671.5 406V472M1672.5 415V476M1673.5 420V481M1674.5 417V464M1675.5 418V468M1676.5 433V468M1677.5 417V473M1678.5 416V463M1679.5 427V466M1680.5 424V465M1681.5 422V469M1682.5 430V460M1683.5 423V463M1684.5 427V465M1685.5 424V464M1686.5 413V471M1687.5 414V472M1688.5 426V463M1689.5 423V465M1690.5 420V458M1691.5 423V465M1692.5 431V460M1693.5 429V458M1694.5 433V456M1695.5 438V460M1696.5 435V452M1697.5 431V458M1698.5 431V464M1699.5 420V468M1700.5 415V476M1701.5 421V469M1702.5 415V478M1703.5 407V477M1704.5 408V481M1705.5 415V467M1706.5 413V484M1707.5 407V476M1708.5 406V484M1709.5 400V480M1710.5 407V471M1711.5 408V469M1712.5 408V485M1713.5 405V477M1714.5 405V478M1715.5 409V479M1716.5 402V485M1717.5 409V491M1718.5 398V480M1719.5 398V491M1720.5 410V492M1721.5 410V480M1722.5 412V478M1723.5 417V478M1724.5 409V473M1725.5 407V476M1726.5 426V468M1727.5 422V465M1728.5 421V464M1729.5 431V465M1730.5 427V467M1731.5 425V458M1732.5 419V463M1733.5 426V463M1734.5 426V459M1735.5 428V468M1736.5 425V466M1737.5 413V464M1738.5 424V478M1739.5 430V466M1740.5 427V466M1741.5 420V466M1742.5 426V472M1743.5 423V476M1744.5 411V467M1745.5 414V479M1746.5 409V475M1747.5 416V468M1748.5 417V476M1749.5 427V473M1750.5 424V461M1751.5 424V465M1752.5 416V464M1753.5 419V475M1754.5 423V467M1755.5 417V468M1756.5 419V466M1757.5 422V464M1758.5 420V471M1759.5 419V470M1760.5 421V462M1761.5 429V474M1762.5 420V465M1763.5 425V469M1764.5 428V464M1765.5 424V464M1766.5 419V459M1767.5 423V466M1768.5 412V470M1769.5 418V469M1770.5 417V471M1771.5 427V477M1772.5 413V462M1773.5 414V475M1774.5 430V473M1775.5 408V484M1776.5 407V473M1777.5 419V480M1778.5 409V468M1779.5 424V478M1780.5 412V480M1781.5 418V473M1782.5 413V473M1783.5 420V496M1784.5 403V470M1785.5 407V481M1786.5 411V482M1787.5 421V476M1788.5 419V458M1789.5 420V474M1790.5 420V477M1791.5 407V470M1792.5 401V489M1793.5 416V474M1794.5 403V463M1795.5 409V479M1796.5 423V477M1797.5 412V475M1798.5 411V468M1799.5 426V472M1800.5 417V472M1801.5 408V470M1802.5 426V479M1803.5 410V471M1804.5 422V477M1805.5 419V466M1806.5 421V460M1807.5 424V469M1808.5 424V470M1809.5 419V471M1810.5 417V470M1811.5 423V470M1812.5 421V470M1813.5 424V475M1814.5 424V465M1815.5 425V470M1816.5 419V462M1817.5 431V471M1818.5 422V462M1819.5 431V464M1820.5 423V464M1821.5 433V458M1822.5 429V458M1823.5 433V459M1824.5 430V461M1825.5 431V464M1826.5 434V455M1827.5 431V462M1828.5 428V460M1829.5 430V462M1830.5 430V465M1831.5 426V461M1832.5 427V463M1833.5 426V457M1834.5 428V466M1835.5 427V464M1836.5 428V459M1837.5 425V457M1838.5 433V467M1839.5 428V465M1840.5 428V461M1841.5 435V461M1842.5 433V458M1843.5 432V460M1844.5 429V463M1845.5 432V461M1846.5 431V458M1847.5 426V461M1848.5 419V465M1849.5 423V468M1850.5 427V470M1851.5 427V462M1852.5 422V468M1853.5 424V470M1854.5 422V463M1855.5 428V464M1856.5 422V458M1857.5 425V471M1858.5 421V476M1859.5 421V460M1860.5 426V472M1861.5 427V467M1862.5 417V470M1863.5 411V478M1864.5 411V471M1865.5 416V468M1866.5 423V466M1867.5 434V462" stroke="#f00" stroke-width="1" fill="none" shape-rendering="crispEdges"/><path d="M1454.5 389.5V502.5H1888M1454.5 416.3h4M1454.5 444.5h4M1454.5 472.7h4M1454.5 402.2h2M1454.5 430.4h2M1454.5 458.6h2M1454.5 486.8h2M1473.2 502.5v-5M1512.6 502.5v-2.5M1552 502.5v-5M1591.5 502.5v-2.5M1630.9 502.5v-5M1670.3 502.5v-2.5M1709.7 502.5v-5M1749.1 502.5v-2.5M1788.6 502.5v-5M1828 502.5v-2.5M1867.4 502.5v-5" stroke="#000" stroke-width="1" fill="none" shape-rendering="crispEdges"/><g font-family='"Liberation Sans", sans-serif' fill="#000"><text x="1449" y="420.1" text-anchor="end" font-size="10.8">2</text><text x="1449" y="448.3" text-anchor="end" font-size="10.8">0</text><text x="1449" y="476.5" text-anchor="end" font-size="10.8">-2</text><text x="1473.2" y="515.3" text-anchor="middle" font-size="10.8">0</text><text x="1552" y="515.3" text-anchor="middle" font-size="10.8">0.2</text><text x="1630.9" y="515.3" text-anchor="middle" font-size="10.8">0.4</text><text x="1709.7" y="515.3" text-anchor="middle" font-size="10.8">0.6</text><text x="1788.6" y="515.3" text-anchor="middle" font-size="10.8">0.8</text><text x="1867.4" y="515.3" text-anchor="middle" font-size="10.8">1</text></g></svg>
<div class="sw" style="left:421px;top:540px;width:495px;height:212px"><div class="tb"><svg class="ico" width="16" height="16" viewBox="0 0 16 16"><rect width="16" height="16" fill="#fff"/><path d="M0 0H9V12.5H9.4L9.8 16H0Z" fill="#2b2a27"/><path d="M6.6 1L7.6 .2L8.6 1.6L9.6 .5L11 .8L12 0H14V1.6L13.2 3L14.2 4.2L14.6 6L13.6 6.6L13 8L11.4 9.8L9.6 10.6L8.4 12L5.8 12.4L4.6 10.4L3.6 8L3 5.6L4 4L4.8 2.6Z" fill="#c9a35e"/><path d="M10.2 9.2L11.4 6.2L12 8.4L11 9.4Z" fill="#4a391c"/><path d="M8.8 .4L12 .2L11 1.2Z" fill="#2b2a27"/></svg><span class="tt">Autospectrum Force 2 Y+</span><div class="wb" style="right:74.2px"><svg width="33" height="18"><rect x="11.3" y="8.6" width="9.9" height="4.2" rx="1.4" fill="#f4f4f4" stroke="#43475a" stroke-width="1.2"/></svg></div><div class="wb" style="right:39.8px"><svg width="33" height="18"><rect x="11.4" y="4.7" width="9.6" height="8" rx="1.3" fill="#f6f6f6" stroke="#43475a" stroke-width="1.2"/><rect x="14.1" y="7.7" width="4.2" height="1.7" fill="#c9d5e6" stroke="#43475a" stroke-width="1.1"/></svg></div><div class="wb" style="right:5.8px"><svg width="33" height="18"><path d="M10.6 4.8h3.3l7 8h-3.3zM17.6 4.8h3.3l-7 8h-3.3z" fill="#43475a" stroke="#43475a" stroke-width="1.7" stroke-linejoin="round"/><path d="M10.6 4.8h3.3l7 8h-3.3zM17.6 4.8h3.3l-7 8h-3.3z" fill="#f6f6f6"/></svg></div></div><div class="ct"></div></div><div class="cb" style="left:438px;top:576px;width:100px;height:20px;line-height:20px">Autospectrum<svg class="chev" width="9" height="6" viewBox="0 0 9 6"><path d="M.5 .8L4.5 4.8L8.5 .8" fill="none" stroke="#555" stroke-width="1"/></svg></div><div class="cb" style="left:545px;top:576px;width:112.5px;height:20px;line-height:20px">Force 2 Y+<svg class="chev" width="9" height="6" viewBox="0 0 9 6"><path d="M.5 .8L4.5 4.8L8.5 .8" fill="none" stroke="#555" stroke-width="1"/></svg></div><div class="ck on" style="left:664px;top:579px"><svg width="13" height="13" viewBox="0 0 13 13"><path d="M3.2 6.7L5.6 9L9.8 4.2" fill="none" stroke="#fff" stroke-width="1.2"/></svg></div><div class="lbl" style="left:681.5px;top:579.5px">Lock</div><svg class="plot" style="left:438px;top:602px" width="461" height="133" viewBox="438 602 461 133"><rect x="438" y="602" width="461" height="133" fill="#fff"/><path d="M490.4 702L490.6 697L491 702L491.4 612.5H793.2V699L793.5 700.9L794 699.5L794.5 697.2L795 698.9L795.5 699.7L796 700.2L796.5 701.7L797 701.4L797.5 698.9L798 700.3L798.5 699.7L799 701.3L799.5 700.3L800 700.6L800.5 701.3L801 700.4L801.5 699.4L802 697.9L802.5 700.9L803 697.6L803.5 699.1L804 698.1L804.5 700.9L805 699.4L805.5 699.6L806 697.3L806.5 701.3L807 701.5L807.5 699.7L808 700.6L808.5 700.3L809 698L809.5 697.4L810 700.1L810.5 700.9L811 698.9L811.5 698.8L812 702.6L812.5 701.9L813 700.9L813.5 700.5L814 698.9L814.5 701.9L815 698.5L815.5 696.9L816 702.7L816.5 701.5L817 701.8L817.5 701L818 698.9L818.5 701.2L819 697.6L819.5 698.2L820 699.7L820.5 701.2L821 699.1L821.5 696.9L822 701.2L822.5 701.3L823 699.2L823.5 701.2L824 700.9L824.5 699.9L825 699.4L825.5 700.4L826 697.1L826.5 698L827 697.1L827.5 702.5L828 698.6L828.5 699L829 703.4L829.5 698.8L830 698.6L830.5 698.1L831 699.4L831.5 699.6L832 699.4L832.5 697.1L833 699.3L833.5 697L834 699.4L834.5 700.5L835 699.7L835.5 700L836 699.7L836.5 700.5L837 703.2L837.5 698.4L838 698.2L838.5 697L839 701.2L839.5 700.3L840 697.2L840.5 700.3L841 699.6L841.5 698.3L842 701.5L842.5 700.6L843 697.9L843.5 700L844 698.7L844.5 696.9L845 698L845.5 702.5L846 701.4L846.5 702.6L847 697.4L847.5 698.9L848 698.5L848.5 699.4L849 700.7L849.5 699.3L850 701.6L850.5 701.3L851 698.8L851.5 697.2L852 698L852.5 699.6L853 697L853.5 701.5L854 701.4L854.5 697.5L855 700.9L855.5 699.8L856 700.3L856.5 699.3L857 704L857.5 697.3L858 697.8L858.5 700.6L859 697.8L859.5 699L860 700.3L860.5 698.6L861 697.2L861.5 701.6L862 699.7L862.5 699.7L863 698.2L863.5 701.3L864 701.7L864.5 700.8L865 701.9L865.5 697.6L866 698.1L866.5 701L867 700.8L867.5 704.5L868 700.3L868.5 700.2L869 698.8L869.5 697.3L870 697.8L870.5 698.1L871 696.9L871.5 699.8L872 701L872.5 701.6L873 698.2L873.5 700.5L874 698.7L874.5 699.8L875 703.2L875.5 699.9L876 700.9L876.5 699.3L877 698.2L877.5 699.5L878 699.8L878.5 700.8V704" stroke="#f00" stroke-width="1" fill="none" shape-rendering="crispEdges"/><rect x="471" y="603.5" width="3" height="111" fill="#000"/><path d="M471 714.5H899M473 625.5h4M473 652.9h4M473 680.6h4M473 708.3h4M490.4 714.5v-5M520.7 714.5v-2.5M551 714.5v-2.5M581.2 714.5v-2.5M611.5 714.5v-2.5M641.8 714.5v-5M672.1 714.5v-2.5M702.4 714.5v-2.5M732.6 714.5v-2.5M762.9 714.5v-2.5M793.2 714.5v-5M823.5 714.5v-2.5M853.8 714.5v-2.5M884 714.5v-2.5" stroke="#000" fill="none" shape-rendering="crispEdges"/><g font-family='"Liberation Sans", sans-serif' fill="#000"><text x="440" y="630" font-size="10.8">10<tspan dy="-3.5" font-size="7.5" font-family='"DejaVu Sans", sans-serif'>−10</tspan></text><text x="440" y="657.4" font-size="10.8">10<tspan dy="-3.5" font-size="7.5" font-family='"DejaVu Sans", sans-serif'>−20</tspan></text><text x="440" y="685.1" font-size="10.8">10<tspan dy="-3.5" font-size="7.5" font-family='"DejaVu Sans", sans-serif'>−30</tspan></text><text x="440" y="712.8" font-size="10.8">10<tspan dy="-3.5" font-size="7.5" font-family='"DejaVu Sans", sans-serif'>−40</tspan></text><text x="490.4" y="727.3" text-anchor="middle" font-size="10.8">0</text><text x="642" y="727.3" text-anchor="middle" font-size="10.8">1000</text><text x="793.2" y="727.3" text-anchor="middle" font-size="10.8">2000</text></g></svg>
<div class="sw act" style="left:916px;top:540px;width:495px;height:212px"><div class="tb"><svg class="ico" width="16" height="16" viewBox="0 0 16 16"><rect width="16" height="16" fill="#fff"/><path d="M0 0H9V12.5H9.4L9.8 16H0Z" fill="#2b2a27"/><path d="M6.6 1L7.6 .2L8.6 1.6L9.6 .5L11 .8L12 0H14V1.6L13.2 3L14.2 4.2L14.6 6L13.6 6.6L13 8L11.4 9.8L9.6 10.6L8.4 12L5.8 12.4L4.6 10.4L3.6 8L3 5.6L4 4L4.8 2.6Z" fill="#c9a35e"/><path d="M10.2 9.2L11.4 6.2L12 8.4L11 9.4Z" fill="#4a391c"/><path d="M8.8 .4L12 .2L11 1.2Z" fill="#2b2a27"/></svg><span class="tt">FRF Coherence Acceleration 2 Y-</span><div class="wb act" style="right:74.2px"><svg width="33" height="18"><rect x="11.3" y="8.6" width="9.9" height="4.2" rx="1.4" fill="#f4f4f4" stroke="#43475a" stroke-width="1.2"/></svg></div><div class="wb act" style="right:39.8px"><svg width="33" height="18"><rect x="11.4" y="4.7" width="9.6" height="8" rx="1.3" fill="#f6f6f6" stroke="#43475a" stroke-width="1.2"/><rect x="14.1" y="7.7" width="4.2" height="1.7" fill="#c9d5e6" stroke="#43475a" stroke-width="1.1"/></svg></div><div class="wb close" style="right:5.8px"><svg width="33" height="18"><path d="M10.6 4.8h3.3l7 8h-3.3zM17.6 4.8h3.3l-7 8h-3.3z" fill="#43475a" stroke="#43475a" stroke-width="1.7" stroke-linejoin="round"/><path d="M10.6 4.8h3.3l7 8h-3.3zM17.6 4.8h3.3l-7 8h-3.3z" fill="#f6f6f6"/></svg></div></div><div class="ct"></div></div><div class="cb" style="left:933px;top:576px;width:100px;height:20px;line-height:20px">FRF Coherence<svg class="chev" width="9" height="6" viewBox="0 0 9 6"><path d="M.5 .8L4.5 4.8L8.5 .8" fill="none" stroke="#555" stroke-width="1"/></svg></div><div class="cb" style="left:1040px;top:576px;width:112.5px;height:20px;line-height:20px">Acceleration 2 Y-<svg class="chev" width="9" height="6" viewBox="0 0 9 6"><path d="M.5 .8L4.5 4.8L8.5 .8" fill="none" stroke="#555" stroke-width="1"/></svg></div><div class="cb" style="left:1159px;top:576px;width:68.5px;height:20px;line-height:20px">Force 2 Y<svg class="chev" width="9" height="6" viewBox="0 0 9 6"><path d="M.5 .8L4.5 4.8L8.5 .8" fill="none" stroke="#555" stroke-width="1"/></svg></div><div class="cb" style="left:1234px;top:576px;width:109px;height:20px;line-height:20px">Magnitude<svg class="chev" width="9" height="6" viewBox="0 0 9 6"><path d="M.5 .8L4.5 4.8L8.5 .8" fill="none" stroke="#555" stroke-width="1"/></svg></div><div class="ck on" style="left:1349px;top:579px"><svg width="13" height="13" viewBox="0 0 13 13"><path d="M3.2 6.7L5.6 9L9.8 4.2" fill="none" stroke="#fff" stroke-width="1.2"/></svg></div><div class="lbl" style="left:1366.5px;top:579.5px">Lock</div><svg class="plot" style="left:933px;top:602px" width="461" height="133" viewBox="933 602 461 133"><rect x="933" y="602" width="461" height="133" fill="#fff"/><path d="M979 612.6H1350M1304.4 612.6V705M1331.3 612.6V705M1343.5 612.6V705M1345.8 612.6V705" stroke="#00f" stroke-width="1" fill="none" shape-rendering="crispEdges"/><path d="M981.5 603L981.7 659.3L985 660L992 661.5L998 664L1003 668.5L1006 675L1008 686L1009 697.6L1010 686L1012 668L1015 645L1017 628L1018.2 614.7L1019 625L1020.5 638L1023 645L1026 648L1032 650.5L1040 652L1050 653.5L1058 655.5L1064 659L1068 665L1071 676L1073 692.6L1074.5 676L1078 655L1082 636L1085.5 618.4L1087 628L1089.5 637L1093 642L1100 645.6L1110 647.5L1125 649.2L1139.7 650.9L1150 653L1158 656L1164 660.5L1169 667L1172 674L1173.2 676.5L1174.5 674L1178 657L1182 640L1185 627L1187.2 622.4L1189 628L1192 636L1196 641L1202 644.3L1212 646.2L1225 647.5L1240 648.3L1253 648.8L1268.2 649L1268.2 603" stroke="#f00" stroke-width="1" fill="none" shape-rendering="crispEdges"/><path d="M961.5 603.5V713.5H1368.5V603.5M961.5 616h5M961.5 640.2h5M961.5 664.6h5M961.5 689h5M961.5 681.7h2.5M961.5 677.4h2.5M961.5 674.3h2.5M961.5 671.9h2.5M961.5 670h2.5M961.5 668.4h2.5M961.5 667h2.5M961.5 665.7h2.5M961.5 657.3h2.5M961.5 653h2.5M961.5 649.9h2.5M961.5 647.5h2.5M961.5 645.6h2.5M961.5 644h2.5M961.5 642.6h2.5M961.5 641.3h2.5M961.5 632.9h2.5M961.5 628.6h2.5M961.5 625.5h2.5M961.5 623.1h2.5M961.5 621.2h2.5M961.5 619.6h2.5M961.5 618.2h2.5M961.5 616.9h2.5M961.5 608.5h2.5M961.5 604.2h2.5M1368.5 612.6h-5M1368.5 621.8h-2.5M1368.5 631h-5M1368.5 640.2h-2.5M1368.5 649.4h-5M1368.5 658.7h-2.5M1368.5 667.9h-5M1368.5 677.1h-2.5M1368.5 686.3h-5M1368.5 695.5h-2.5M1368.5 704.7h-5M979.2 713.5v-5M1008.1 713.5v-2.5M1037 713.5v-2.5M1065.9 713.5v-2.5M1094.8 713.5v-2.5M1123.7 713.5v-5M1152.6 713.5v-2.5M1181.5 713.5v-2.5M1210.4 713.5v-2.5M1239.3 713.5v-2.5M1268.2 713.5v-5M1297.1 713.5v-2.5M1326 713.5v-2.5M1354.9 713.5v-2.5" stroke="#000" fill="none" shape-rendering="crispEdges"/><g font-family='"Liberation Sans", sans-serif' fill="#000"><text x="955.5" y="620" text-anchor="end" font-size="10.8">10<tspan dy="-3.5" font-size="7.5" font-family='"DejaVu Sans", sans-serif'>2</tspan></text><text x="955.5" y="644" text-anchor="end" font-size="10.8">10<tspan dy="-3.5" font-size="7.5" font-family='"DejaVu Sans", sans-serif'>1</tspan></text><text x="955.5" y="668.4" text-anchor="end" font-size="10.8">1</text><text x="955.5" y="693" text-anchor="end" font-size="10.8">0.1</text><text x="1373" y="616.5" text-anchor="start" font-size="10.8">1</text><text x="1373" y="634.9" text-anchor="start" font-size="10.8">0.8</text><text x="1373" y="653.3" text-anchor="start" font-size="10.8">0.6</text><text x="1373" y="671.8" text-anchor="start" font-size="10.8">0.4</text><text x="1373" y="690.2" text-anchor="start" font-size="10.8">0.2</text><text x="1373" y="708.6" text-anchor="start" font-size="10.8">0</text><text x="979.2" y="727.3" text-anchor="middle" font-size="10.8">0</text><text x="1124.1" y="727.3" text-anchor="middle" font-size="10.8">1000</text><text x="1268.2" y="727.3" text-anchor="middle" font-size="10.8">2000</text></g></svg>
<div class="sw" style="left:1411px;top:540px;width:494px;height:212px"><div class="tb"><svg class="ico" width="16" height="16" viewBox="0 0 16 16"><rect width="16" height="16" fill="#fff"/><path d="M0 0H9V12.5H9.4L9.8 16H0Z" fill="#2b2a27"/><path d="M6.6 1L7.6 .2L8.6 1.6L9.6 .5L11 .8L12 0H14V1.6L13.2 3L14.2 4.2L14.6 6L13.6 6.6L13 8L11.4 9.8L9.6 10.6L8.4 12L5.8 12.4L4.6 10.4L3.6 8L3 5.6L4 4L4.8 2.6Z" fill="#c9a35e"/><path d="M10.2 9.2L11.4 6.2L12 8.4L11 9.4Z" fill="#4a391c"/><path d="M8.8 .4L12 .2L11 1.2Z" fill="#2b2a27"/></svg><span class="tt">FRF Acceleration 2 Y- Force 2 Y+</span><div class="wb" style="right:74.2px"><svg width="33" height="18"><rect x="11.3" y="8.6" width="9.9" height="4.2" rx="1.4" fill="#f4f4f4" stroke="#43475a" stroke-width="1.2"/></svg></div><div class="wb" style="right:39.8px"><svg width="33" height="18"><rect x="11.4" y="4.7" width="9.6" height="8" rx="1.3" fill="#f6f6f6" stroke="#43475a" stroke-width="1.2"/><rect x="14.1" y="7.7" width="4.2" height="1.7" fill="#c9d5e6" stroke="#43475a" stroke-width="1.1"/></svg></div><div class="wb" style="right:5.8px"><svg width="33" height="18"><path d="M10.6 4.8h3.3l7 8h-3.3zM17.6 4.8h3.3l-7 8h-3.3z" fill="#43475a" stroke="#43475a" stroke-width="1.7" stroke-linejoin="round"/><path d="M10.6 4.8h3.3l7 8h-3.3zM17.6 4.8h3.3l-7 8h-3.3z" fill="#f6f6f6"/></svg></div></div><div class="ct"></div></div><div class="cb" style="left:1428px;top:576px;width:100px;height:20px;line-height:20px">FRF<svg class="chev" width="9" height="6" viewBox="0 0 9 6"><path d="M.5 .8L4.5 4.8L8.5 .8" fill="none" stroke="#555" stroke-width="1"/></svg></div><div class="cb" style="left:1535px;top:576px;width:112.5px;height:20px;line-height:20px">Acceleration 2 Y-<svg class="chev" width="9" height="6" viewBox="0 0 9 6"><path d="M.5 .8L4.5 4.8L8.5 .8" fill="none" stroke="#555" stroke-width="1"/></svg></div><div class="cb" style="left:1654px;top:576px;width:68.5px;height:20px;line-height:20px">Force 2 Y<svg class="chev" width="9" height="6" viewBox="0 0 9 6"><path d="M.5 .8L4.5 4.8L8.5 .8" fill="none" stroke="#555" stroke-width="1"/></svg></div><div class="cb" style="left:1729px;top:576px;width:109px;height:20px;line-height:20px">Imaginary<svg class="chev" width="9" height="6" viewBox="0 0 9 6"><path d="M.5 .8L4.5 4.8L8.5 .8" fill="none" stroke="#555" stroke-width="1"/></svg></div><div class="ck on" style="left:1844px;top:579px"><svg width="13" height="13" viewBox="0 0 13 13"><path d="M3.2 6.7L5.6 9L9.8 4.2" fill="none" stroke="#fff" stroke-width="1.2"/></svg></div><div class="lbl" style="left:1861.5px;top:579.5px">Lock</div><svg class="plot" style="left:1428px;top:602px" width="460" height="133" viewBox="1428 602 460 133"><rect x="1428" y="602" width="460" height="133" fill="#fff"/><path d="M1472 632.7L1511.1 632.8L1511.6 632.9L1512.1 632.9L1512.6 632.9L1513.1 632.9L1513.6 632.9L1514.1 633L1514.6 633L1515.1 633L1515.6 633.1L1516.1 633.1L1516.6 633.2L1517.1 633.3L1517.6 633.4L1518.1 633.5L1518.6 633.7L1519.1 634L1519.6 634.4L1520.1 635L1520.6 636L1521.1 637.7L1521.6 641.1L1522.1 649.2L1522.6 671.6L1523.1 703.7L1523.6 671.6L1524.1 649.2L1524.6 641.1L1525.1 637.7L1525.6 636L1526.1 635L1526.6 634.4L1527.1 634L1527.6 633.7L1528.1 633.5L1528.6 633.4L1529.1 633.3L1529.6 633.2L1530.1 633.1L1530.6 633.1L1531.1 633L1531.6 633L1532.1 633L1532.6 632.9L1533.1 632.9L1533.6 632.9L1534.1 632.9L1534.6 632.9L1535.1 632.8L1606.3 632.9L1606.8 632.9L1607.3 633L1607.8 633L1608.3 633L1608.8 633L1609.3 633.1L1609.8 633.1L1610.3 633.2L1610.8 633.3L1611.3 633.3L1611.8 633.4L1612.3 633.6L1612.8 633.7L1613.3 633.9L1613.8 634.2L1614.3 634.6L1614.8 635.1L1615.3 636L1615.8 637.3L1616.3 639.5L1616.8 643.6L1617.3 651.8L1617.8 667.9L1618.3 681.7L1618.8 667.9L1619.3 651.8L1619.8 643.6L1620.3 639.5L1620.8 637.3L1621.3 636L1621.8 635.1L1622.3 634.6L1622.8 634.2L1623.3 633.9L1623.8 633.7L1624.3 633.6L1624.8 633.4L1625.3 633.3L1625.8 633.3L1626.3 633.2L1626.8 633.1L1627.3 633.1L1627.8 633L1628.3 633L1628.8 633L1629.3 633L1629.8 632.9L1630.3 632.9L1749 633L1749.5 633L1750 633L1750.5 633.1L1751 633.1L1751.5 633.1L1752 633.2L1752.5 633.2L1753 633.3L1753.5 633.4L1754 633.5L1754.5 633.6L1755 633.8L1755.5 634L1756 634.2L1756.5 634.6L1757 635L1757.5 635.7L1758 636.6L1758.5 638.1L1759 640.4L1759.5 644.2L1760 650.8L1760.5 660L1761 665.7L1761.5 660L1762 650.8L1762.5 644.2L1763 640.4L1763.5 638.1L1764 636.6L1764.5 635.7L1765 635L1765.5 634.6L1766 634.2L1766.5 634L1767 633.8L1767.5 633.6L1768 633.5L1768.5 633.4L1769 633.3L1769.5 633.2L1770 633.2L1770.5 633.1L1771 633.1L1771.5 633.1L1772 633L1772.5 633L1773 633L1875 632.7" stroke="#f00" stroke-width="1" fill="none" shape-rendering="crispEdges"/><rect x="1468.8" y="603" width="3.3" height="111" fill="#f00"/><rect x="1874.7" y="603" width="12.8" height="111.5" fill="#f00"/><path d="M1462.5 603.5V713.5H1888M1462.5 607.5h2.5M1462.5 620.1h2.5M1462.5 632.7h5M1462.5 645.3h2.5M1462.5 657.9h2.5M1462.5 670.6h2.5M1462.5 683.2h2.5M1462.5 695.8h5M1462.5 708.4h2.5M1468.8 713.5v-4M1509.4 713.5v-4M1550.1 713.5v-4M1590.7 713.5v-4M1631.4 713.5v-4M1672 713.5v-4M1712.6 713.5v-4M1753.3 713.5v-4M1793.9 713.5v-4M1834.6 713.5v-4M1875.2 713.5v-4" stroke="#000" fill="none" shape-rendering="crispEdges"/><g font-family='"Liberation Sans", sans-serif' fill="#000"><text x="1457" y="636.5" text-anchor="end" font-size="10.8">0</text><text x="1457" y="699.6" text-anchor="end" font-size="10.8">-100</text><text x="1468.8" y="727.3" text-anchor="middle" font-size="10.8">0</text><text x="1509.4" y="727.3" text-anchor="middle" font-size="10.8">200</text><text x="1550.1" y="727.3" text-anchor="middle" font-size="10.8">400</text><text x="1590.7" y="727.3" text-anchor="middle" font-size="10.8">600</text><text x="1631.4" y="727.3" text-anchor="middle" font-size="10.8">800</text><text x="1672" y="727.3" text-anchor="middle" font-size="10.8">1000</text><text x="1712.6" y="727.3" text-anchor="middle" font-size="10.8">1200</text><text x="1753.3" y="727.3" text-anchor="middle" font-size="10.8">1400</text><text x="1793.9" y="727.3" text-anchor="middle" font-size="10.8">1600</text><text x="1834.6" y="727.3" text-anchor="middle" font-size="10.8">1800</text></g></svg>
</body></html>
